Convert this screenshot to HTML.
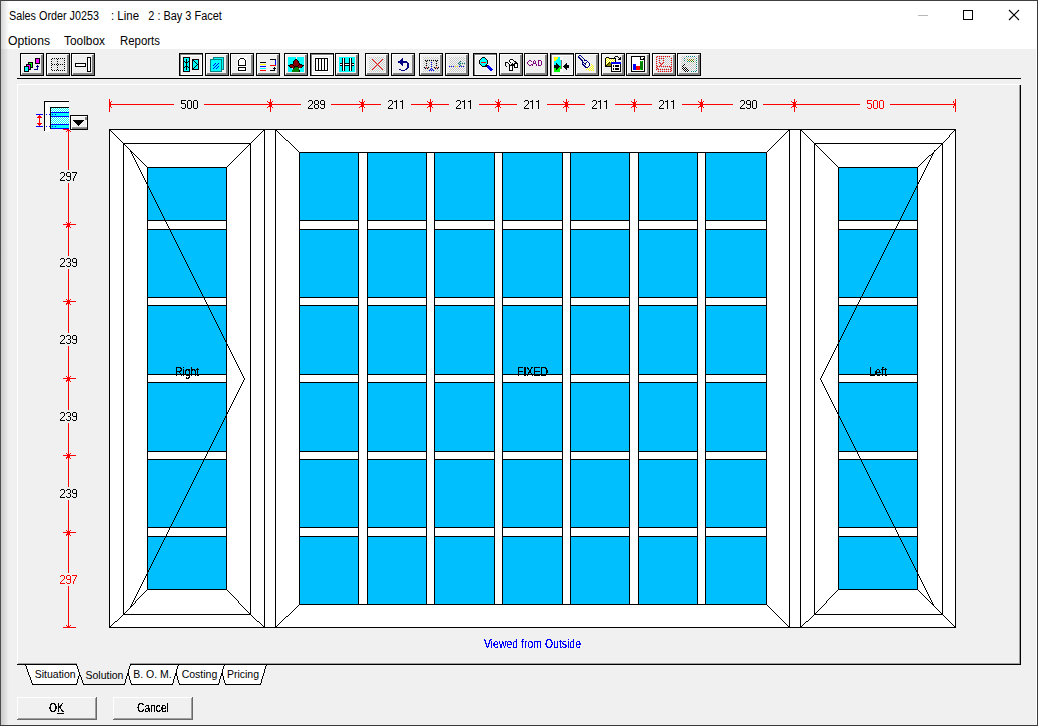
<!DOCTYPE html>
<html><head><meta charset="utf-8"><title>Sales Order</title>
<style>
html,body{margin:0;padding:0;background:#f0f0f0;overflow:hidden;}
body{width:1038px;height:726px;font-family:"Liberation Sans",sans-serif;}
svg{display:block;position:absolute;left:0;top:0;}
svg text{font-family:"Liberation Sans",sans-serif;}
.crisp{shape-rendering:crispEdges;}
</style></head>
<body>
<svg class="crisp" width="1038" height="726" viewBox="0 0 1038 726">
<rect x="0" y="0" width="1038" height="726" fill="#f0f0f0"/>
<rect x="0" y="0" width="1038" height="49" fill="#ffffff"/>
<defs><linearGradient id="lg" x1="0" x2="1" y1="0" y2="0"><stop offset="0" stop-color="#000" stop-opacity="0.16"/><stop offset="1" stop-color="#000" stop-opacity="0"/></linearGradient></defs>
<rect x="1" y="1" width="8" height="724" fill="url(#lg)"/>
<rect x="0" y="0" width="1038" height="1" fill="#3f3f3f"/>
<rect x="0" y="0" width="1" height="726" fill="#4d4d4d"/>
<rect x="1036" y="49" width="1" height="676" fill="#ffffff"/>
<rect x="1037" y="0" width="1" height="726" fill="#3a3a3a"/>
<rect x="0" y="725" width="1038" height="1" fill="#3a3a3a"/>
<rect x="918" y="15" width="10" height="1" fill="#b8b8b8"/>
<rect x="963" y="10" width="10" height="1" fill="#000"/>
<rect x="963" y="19" width="10" height="1" fill="#000"/>
<rect x="963" y="10" width="1" height="10" fill="#000"/>
<rect x="972" y="10" width="1" height="10" fill="#000"/>
<path d="M1009 10.5 L1019 20.5 M1019 10.5 L1009 20.5" stroke="#000" stroke-width="1.1" fill="none" shape-rendering="geometricPrecision" transform="translate(0,-0.5)"/>
<text x="9" y="19.5" font-size="12" fill="#000" text-anchor="start" textLength="90" lengthAdjust="spacingAndGlyphs">Sales Order J0253</text>
<text x="111" y="19.5" font-size="12" fill="#000" text-anchor="start" textLength="28" lengthAdjust="spacingAndGlyphs">: Line</text>
<text x="148.3" y="19.5" font-size="12" fill="#000" text-anchor="start" textLength="73.5" lengthAdjust="spacingAndGlyphs">2 : Bay 3 Facet</text>
<text x="8" y="44.5" font-size="12" fill="#000" text-anchor="start" textLength="42" lengthAdjust="spacingAndGlyphs">Options</text>
<text x="64" y="44.5" font-size="12" fill="#000" text-anchor="start" textLength="41" lengthAdjust="spacingAndGlyphs">Toolbox</text>
<text x="120" y="44.5" font-size="12" fill="#000" text-anchor="start" textLength="40" lengthAdjust="spacingAndGlyphs">Reports</text>
<rect x="17" y="78" width="1004" height="1" fill="#000"/>
<rect x="17" y="84" width="1003" height="1" fill="#ffffff"/>
<rect x="17" y="84" width="1" height="581" fill="#ffffff"/>
<rect x="1019" y="85" width="1" height="579" fill="#a0a0a0"/>
<rect x="18" y="663" width="1002" height="1" fill="#a0a0a0"/>
<rect x="1020" y="85" width="1" height="580" fill="#000"/>
<rect x="17" y="664" width="1004" height="1" fill="#000"/>
<defs><pattern id="dz" x="0" y="0" width="2" height="2" patternUnits="userSpaceOnUse"><rect width="2" height="2" fill="#fbfbfb"/><rect x="0" y="0" width="1" height="1" fill="#c6c6c6"/><rect x="1" y="1" width="1" height="1" fill="#c6c6c6"/></pattern><pattern id="dzl" x="0" y="0" width="2" height="2" patternUnits="userSpaceOnUse"><rect width="2" height="2" fill="#f2f2f2"/><rect x="0" y="0" width="1" height="1" fill="#dadada"/><rect x="1" y="1" width="1" height="1" fill="#dadada"/></pattern><pattern id="dy" x="0" y="0" width="2" height="2" patternUnits="userSpaceOnUse"><rect width="2" height="2" fill="#ffff00"/><rect x="1" y="0" width="1" height="1" fill="#fff"/><rect x="0" y="1" width="1" height="1" fill="#fff"/></pattern></defs>
<rect x="20" y="53" width="24" height="23" fill="#f0f0f0"/>
<rect x="20" y="53" width="24" height="1" fill="#000"/>
<rect x="20" y="75" width="24" height="1" fill="#000"/>
<rect x="20" y="53" width="1" height="23" fill="#000"/>
<rect x="43" y="53" width="1" height="23" fill="#000"/>
<rect x="21" y="54" width="22" height="1" fill="#fff"/>
<rect x="21" y="54" width="1" height="21" fill="#fff"/>
<rect x="21" y="74" width="22" height="1" fill="#808080"/>
<rect x="22" y="73" width="21" height="1" fill="#808080"/>
<rect x="42" y="54" width="1" height="21" fill="#808080"/>
<rect x="41" y="55" width="1" height="20" fill="#808080"/>
<path d="M42 54h1v1h-1z" fill="#c8c8c8"/>
<path d="M21 74h1v1h-1z" fill="#c8c8c8"/>
<rect x="35" y="58" width="5" height="6" fill="#ff00ff"/>
<rect x="35" y="58" width="5" height="1" fill="#000"/>
<rect x="35" y="63" width="5" height="1" fill="#000"/>
<rect x="35" y="58" width="1" height="6" fill="#000"/>
<rect x="39" y="58" width="1" height="6" fill="#000"/>
<rect x="28" y="62" width="5" height="6" fill="#00ff00"/>
<rect x="28" y="62" width="5" height="1" fill="#000"/>
<rect x="28" y="67" width="5" height="1" fill="#000"/>
<rect x="28" y="62" width="1" height="6" fill="#000"/>
<rect x="32" y="62" width="1" height="6" fill="#000"/>
<rect x="26" y="64" width="5" height="6" fill="#ff00ff"/>
<rect x="26" y="64" width="5" height="1" fill="#000"/>
<rect x="26" y="69" width="5" height="1" fill="#000"/>
<rect x="26" y="64" width="1" height="6" fill="#000"/>
<rect x="30" y="64" width="1" height="6" fill="#000"/>
<rect x="24" y="66" width="5" height="6" fill="#00ffff"/>
<rect x="24" y="66" width="5" height="1" fill="#000"/>
<rect x="24" y="71" width="5" height="1" fill="#000"/>
<rect x="24" y="66" width="1" height="6" fill="#000"/>
<rect x="28" y="66" width="1" height="6" fill="#000"/>
<rect x="34" y="69" width="4" height="1" fill="#000080"/>
<rect x="37" y="65" width="1" height="5" fill="#000080"/>
<rect x="36" y="66" width="3" height="1" fill="#000080"/>
<rect x="46" y="53" width="24" height="23" fill="#f0f0f0"/>
<rect x="46" y="53" width="24" height="1" fill="#000"/>
<rect x="46" y="75" width="24" height="1" fill="#000"/>
<rect x="46" y="53" width="1" height="23" fill="#000"/>
<rect x="69" y="53" width="1" height="23" fill="#000"/>
<rect x="47" y="54" width="22" height="1" fill="#fff"/>
<rect x="47" y="54" width="1" height="21" fill="#fff"/>
<rect x="47" y="74" width="22" height="1" fill="#808080"/>
<rect x="48" y="73" width="21" height="1" fill="#808080"/>
<rect x="68" y="54" width="1" height="21" fill="#808080"/>
<rect x="67" y="55" width="1" height="20" fill="#808080"/>
<path d="M68 54h1v1h-1z" fill="#c8c8c8"/>
<path d="M47 74h1v1h-1z" fill="#c8c8c8"/>
<rect x="51" y="58" width="14" height="13" fill="url(#dzl)"/>
<path d="M52 58h1v1h-1zM52 64h1v1h-1zM52 70h1v1h-1zM54 58h1v1h-1zM54 64h1v1h-1zM54 70h1v1h-1zM56 58h1v1h-1zM56 64h1v1h-1zM56 70h1v1h-1zM58 58h1v1h-1zM58 64h1v1h-1zM58 70h1v1h-1zM60 58h1v1h-1zM60 64h1v1h-1zM60 70h1v1h-1zM62 58h1v1h-1zM62 64h1v1h-1zM62 70h1v1h-1zM64 58h1v1h-1zM64 64h1v1h-1zM64 70h1v1h-1zM51 59h1v1h-1zM57 59h1v1h-1zM51 61h1v1h-1zM57 61h1v1h-1zM51 63h1v1h-1zM57 63h1v1h-1zM51 65h1v1h-1zM57 65h1v1h-1zM51 67h1v1h-1zM57 67h1v1h-1zM51 69h1v1h-1zM57 69h1v1h-1zM64 58h1v1h-1zM64 60h1v1h-1zM64 62h1v1h-1zM64 64h1v1h-1zM64 66h1v1h-1zM64 68h1v1h-1zM64 70h1v1h-1zM56 64h1v1h-1zM58 64h1v1h-1zM52 64h1v1h-1z" fill="#000"/>
<rect x="71" y="53" width="24" height="23" fill="#f0f0f0"/>
<rect x="71" y="53" width="24" height="1" fill="#000"/>
<rect x="71" y="75" width="24" height="1" fill="#000"/>
<rect x="71" y="53" width="1" height="23" fill="#000"/>
<rect x="94" y="53" width="1" height="23" fill="#000"/>
<rect x="72" y="54" width="22" height="1" fill="#fff"/>
<rect x="72" y="54" width="1" height="21" fill="#fff"/>
<rect x="72" y="74" width="22" height="1" fill="#808080"/>
<rect x="73" y="73" width="21" height="1" fill="#808080"/>
<rect x="93" y="54" width="1" height="21" fill="#808080"/>
<rect x="92" y="55" width="1" height="20" fill="#808080"/>
<path d="M93 54h1v1h-1z" fill="#c8c8c8"/>
<path d="M72 74h1v1h-1z" fill="#c8c8c8"/>
<rect x="75" y="63" width="11" height="4" fill="#fff"/>
<rect x="75" y="63" width="11" height="1" fill="#000"/>
<rect x="75" y="66" width="11" height="1" fill="#000"/>
<rect x="75" y="63" width="1" height="4" fill="#000"/>
<rect x="85" y="63" width="1" height="4" fill="#000"/>
<rect x="87" y="57" width="4" height="15" fill="#fff"/>
<rect x="87" y="57" width="4" height="1" fill="#000"/>
<rect x="87" y="71" width="4" height="1" fill="#000"/>
<rect x="87" y="57" width="1" height="15" fill="#000"/>
<rect x="90" y="57" width="1" height="15" fill="#000"/>
<rect x="179" y="53" width="24" height="23" fill="#f0f0f0"/>
<rect x="179" y="53" width="24" height="1" fill="#000"/>
<rect x="179" y="75" width="24" height="1" fill="#000"/>
<rect x="179" y="53" width="1" height="23" fill="#000"/>
<rect x="202" y="53" width="1" height="23" fill="#000"/>
<rect x="180" y="54" width="22" height="1" fill="#808080"/>
<rect x="180" y="54" width="1" height="21" fill="#808080"/>
<rect x="181" y="55" width="21" height="1" fill="#fff"/>
<rect x="181" y="55" width="1" height="20" fill="#fff"/>
<rect x="181" y="74" width="21" height="1" fill="#fff"/>
<rect x="201" y="55" width="1" height="20" fill="#fff"/>
<rect x="183" y="57" width="7" height="15" fill="#00ffff"/>
<rect x="183" y="57" width="7" height="1" fill="#100000"/>
<rect x="183" y="71" width="7" height="1" fill="#100000"/>
<rect x="183" y="57" width="1" height="15" fill="#100000"/>
<rect x="189" y="57" width="1" height="15" fill="#100000"/>
<rect x="186" y="59" width="1" height="11" fill="#000"/>
<path d="M184 61h1v1h-1zM185 62h1v1h-1zM187 62h1v1h-1zM188 61h1v1h-1zM184 67h1v1h-1zM185 66h1v1h-1zM187 66h1v1h-1zM188 67h1v1h-1z" fill="#000"/>
<rect x="192" y="59" width="7" height="11" fill="#00ffff"/>
<rect x="192" y="59" width="7" height="1" fill="#100000"/>
<rect x="192" y="69" width="7" height="1" fill="#100000"/>
<rect x="192" y="59" width="1" height="11" fill="#100000"/>
<rect x="198" y="59" width="1" height="11" fill="#100000"/>
<path d="M193 60h1v1h-1zM194 61h1v1h-1zM195 62h1v1h-1zM196 63h1v1h-1zM197 64h1v1h-1z" fill="#000"/>
<path d="M197 64h1v1h-1zM196 65h1v1h-1zM195 66h1v1h-1zM194 67h1v1h-1zM193 68h1v1h-1z" fill="#000"/>
<rect x="205" y="53" width="24" height="23" fill="#f0f0f0"/>
<rect x="205" y="53" width="24" height="1" fill="#000"/>
<rect x="205" y="75" width="24" height="1" fill="#000"/>
<rect x="205" y="53" width="1" height="23" fill="#000"/>
<rect x="228" y="53" width="1" height="23" fill="#000"/>
<rect x="206" y="54" width="22" height="1" fill="#fff"/>
<rect x="206" y="54" width="1" height="21" fill="#fff"/>
<rect x="206" y="74" width="22" height="1" fill="#808080"/>
<rect x="207" y="73" width="21" height="1" fill="#808080"/>
<rect x="227" y="54" width="1" height="21" fill="#808080"/>
<rect x="226" y="55" width="1" height="20" fill="#808080"/>
<path d="M227 54h1v1h-1z" fill="#c8c8c8"/>
<path d="M206 74h1v1h-1z" fill="#c8c8c8"/>
<rect x="213" y="57" width="11" height="13" fill="#00ffff"/>
<rect x="213" y="57" width="11" height="1" fill="#008080"/>
<rect x="213" y="69" width="11" height="1" fill="#008080"/>
<rect x="213" y="57" width="1" height="13" fill="#008080"/>
<rect x="223" y="57" width="1" height="13" fill="#008080"/>
<rect x="210" y="59" width="12" height="13" fill="#00ffff"/>
<rect x="210" y="59" width="12" height="1" fill="#008080"/>
<rect x="210" y="71" width="12" height="1" fill="#008080"/>
<rect x="210" y="59" width="1" height="13" fill="#008080"/>
<rect x="221" y="59" width="1" height="13" fill="#008080"/>
<path d="M215 63h1v1h-1zM214 64h1v1h-1zM213 65h1v1h-1zM218 63h1v1h-1zM217 64h1v1h-1zM216 65h1v1h-1zM215 66h1v1h-1zM214 67h1v1h-1zM213 68h1v1h-1zM218 66h1v1h-1zM217 67h1v1h-1zM216 68h1v1h-1z" fill="#0000ff"/>
<rect x="230" y="53" width="24" height="23" fill="#f0f0f0"/>
<rect x="230" y="53" width="24" height="1" fill="#000"/>
<rect x="230" y="75" width="24" height="1" fill="#000"/>
<rect x="230" y="53" width="1" height="23" fill="#000"/>
<rect x="253" y="53" width="1" height="23" fill="#000"/>
<rect x="231" y="54" width="22" height="1" fill="#fff"/>
<rect x="231" y="54" width="1" height="21" fill="#fff"/>
<rect x="231" y="74" width="22" height="1" fill="#808080"/>
<rect x="232" y="73" width="21" height="1" fill="#808080"/>
<rect x="252" y="54" width="1" height="21" fill="#808080"/>
<rect x="251" y="55" width="1" height="20" fill="#808080"/>
<path d="M252 54h1v1h-1z" fill="#c8c8c8"/>
<path d="M231 74h1v1h-1z" fill="#c8c8c8"/>
<rect x="237" y="57" width="10" height="15" fill="#fff"/>
<rect x="240" y="58" width="4" height="1" fill="#000"/>
<path d="M239 59h1v1h-1zM244 59h1v1h-1z" fill="#000"/>
<rect x="238" y="60" width="1" height="6" fill="#000"/>
<rect x="245" y="60" width="1" height="6" fill="#000"/>
<rect x="238" y="65" width="8" height="1" fill="#000"/>
<rect x="238" y="67" width="8" height="4" fill="#fff"/>
<rect x="238" y="67" width="8" height="1" fill="#000"/>
<rect x="238" y="70" width="8" height="1" fill="#000"/>
<rect x="238" y="67" width="1" height="4" fill="#000"/>
<rect x="245" y="67" width="1" height="4" fill="#000"/>
<rect x="256" y="53" width="24" height="23" fill="#f0f0f0"/>
<rect x="256" y="53" width="24" height="1" fill="#000"/>
<rect x="256" y="75" width="24" height="1" fill="#000"/>
<rect x="256" y="53" width="1" height="23" fill="#000"/>
<rect x="279" y="53" width="1" height="23" fill="#000"/>
<rect x="257" y="54" width="22" height="1" fill="#fff"/>
<rect x="257" y="54" width="1" height="21" fill="#fff"/>
<rect x="257" y="74" width="22" height="1" fill="#808080"/>
<rect x="258" y="73" width="21" height="1" fill="#808080"/>
<rect x="278" y="54" width="1" height="21" fill="#808080"/>
<rect x="277" y="55" width="1" height="20" fill="#808080"/>
<path d="M278 54h1v1h-1z" fill="#c8c8c8"/>
<path d="M257 74h1v1h-1z" fill="#c8c8c8"/>
<rect x="260" y="62" width="6" height="1" fill="#000"/>
<rect x="260" y="64" width="6" height="1" fill="#ffff00"/>
<rect x="260" y="66" width="6" height="1" fill="#0000ff"/>
<rect x="260" y="68" width="6" height="1" fill="#00ffff"/>
<rect x="260" y="70" width="6" height="1" fill="#ff0000"/>
<rect x="270" y="59" width="6" height="1" fill="#000"/>
<rect x="275" y="60" width="1" height="5" fill="#0000ff"/>
<rect x="270" y="65" width="6" height="1" fill="#ff0000"/>
<rect x="270" y="70" width="5" height="1" fill="#000"/>
<rect x="274" y="67" width="1" height="4" fill="#000"/>
<rect x="273" y="68" width="3" height="1" fill="#000"/>
<rect x="284" y="53" width="24" height="23" fill="#f0f0f0"/>
<rect x="284" y="53" width="24" height="1" fill="#000"/>
<rect x="284" y="75" width="24" height="1" fill="#000"/>
<rect x="284" y="53" width="1" height="23" fill="#000"/>
<rect x="307" y="53" width="1" height="23" fill="#000"/>
<rect x="285" y="54" width="22" height="1" fill="#fff"/>
<rect x="285" y="54" width="1" height="21" fill="#fff"/>
<rect x="285" y="74" width="22" height="1" fill="#808080"/>
<rect x="286" y="73" width="21" height="1" fill="#808080"/>
<rect x="306" y="54" width="1" height="21" fill="#808080"/>
<rect x="305" y="55" width="1" height="20" fill="#808080"/>
<path d="M306 54h1v1h-1z" fill="#c8c8c8"/>
<path d="M285 74h1v1h-1z" fill="#c8c8c8"/>
<rect x="288" y="57" width="16" height="15" fill="#00ffff"/>
<path d="M295 59h1v1h-1zM296 59h1v1h-1zM294 60h1v1h-1zM297 60h1v1h-1zM293 61h1v1h-1zM298 61h1v1h-1zM293 62h1v1h-1zM298 62h1v1h-1zM293 63h1v1h-1zM299 63h1v1h-1zM290 64h1v1h-1zM291 64h1v1h-1zM292 64h1v1h-1zM299 64h1v1h-1zM300 64h1v1h-1zM301 64h1v1h-1zM288 65h1v1h-1zM289 65h1v1h-1zM293 65h1v1h-1zM298 65h1v1h-1zM302 65h1v1h-1zM303 65h1v1h-1zM289 66h1v1h-1zM294 66h1v1h-1zM295 66h1v1h-1zM296 66h1v1h-1zM297 66h1v1h-1zM302 66h1v1h-1zM290 67h1v1h-1zM291 67h1v1h-1zM294 67h1v1h-1zM298 67h1v1h-1zM301 67h1v1h-1zM293 68h1v1h-1zM299 70h1v1h-1zM299 71h1v1h-1z" fill="#000"/>
<path d="M295 60h1v1h-1zM296 60h1v1h-1zM294 61h1v1h-1zM295 61h1v1h-1zM296 61h1v1h-1zM297 61h1v1h-1zM294 62h1v1h-1zM295 62h1v1h-1zM296 62h1v1h-1zM297 62h1v1h-1zM294 63h1v1h-1zM295 63h1v1h-1zM296 63h1v1h-1zM297 63h1v1h-1zM298 63h1v1h-1zM293 64h1v1h-1zM294 64h1v1h-1zM295 64h1v1h-1zM296 64h1v1h-1zM297 64h1v1h-1zM298 64h1v1h-1zM290 65h1v1h-1zM291 65h1v1h-1zM292 65h1v1h-1zM294 65h1v1h-1zM295 65h1v1h-1zM296 65h1v1h-1zM297 65h1v1h-1zM299 65h1v1h-1zM300 65h1v1h-1zM301 65h1v1h-1zM290 66h1v1h-1zM291 66h1v1h-1zM292 66h1v1h-1zM293 66h1v1h-1zM298 66h1v1h-1zM299 66h1v1h-1zM300 66h1v1h-1zM301 66h1v1h-1zM292 67h1v1h-1zM293 67h1v1h-1zM299 67h1v1h-1zM300 67h1v1h-1z" fill="#8b0000"/>
<path d="M295 67h1v1h-1zM296 67h1v1h-1zM297 67h1v1h-1zM294 68h1v1h-1zM295 68h1v1h-1zM296 68h1v1h-1zM297 68h1v1h-1zM298 68h1v1h-1zM293 69h1v1h-1zM294 69h1v1h-1zM295 69h1v1h-1zM296 69h1v1h-1zM297 69h1v1h-1zM298 69h1v1h-1zM292 70h1v1h-1zM293 70h1v1h-1zM294 70h1v1h-1zM295 70h1v1h-1zM296 70h1v1h-1zM297 70h1v1h-1zM298 70h1v1h-1zM292 71h1v1h-1zM293 71h1v1h-1zM294 71h1v1h-1zM295 71h1v1h-1zM296 71h1v1h-1zM297 71h1v1h-1zM298 71h1v1h-1z" fill="#008000"/>
<path d="M296 57h1v1h-1zM296 58h1v1h-1zM292 68h1v1h-1zM299 68h1v1h-1z" fill="#ffe8e8"/>
<rect x="310" y="53" width="24" height="23" fill="#f0f0f0"/>
<rect x="310" y="53" width="24" height="1" fill="#000"/>
<rect x="310" y="75" width="24" height="1" fill="#000"/>
<rect x="310" y="53" width="1" height="23" fill="#000"/>
<rect x="333" y="53" width="1" height="23" fill="#000"/>
<rect x="311" y="54" width="22" height="1" fill="#808080"/>
<rect x="311" y="54" width="1" height="21" fill="#808080"/>
<rect x="312" y="55" width="21" height="1" fill="#fff"/>
<rect x="312" y="55" width="1" height="20" fill="#fff"/>
<rect x="312" y="74" width="21" height="1" fill="#fff"/>
<rect x="332" y="55" width="1" height="20" fill="#fff"/>
<rect x="314" y="57" width="15" height="15" fill="#fff"/>
<rect x="315" y="58" width="13" height="13" fill="#fff"/>
<rect x="315" y="58" width="13" height="1" fill="#000"/>
<rect x="315" y="70" width="13" height="1" fill="#000"/>
<rect x="315" y="58" width="1" height="13" fill="#000"/>
<rect x="327" y="58" width="1" height="13" fill="#000"/>
<rect x="318" y="58" width="1" height="13" fill="#000"/>
<rect x="321" y="58" width="1" height="13" fill="#000"/>
<rect x="324" y="58" width="1" height="13" fill="#000"/>
<rect x="335" y="53" width="24" height="23" fill="#f0f0f0"/>
<rect x="335" y="53" width="24" height="1" fill="#000"/>
<rect x="335" y="75" width="24" height="1" fill="#000"/>
<rect x="335" y="53" width="1" height="23" fill="#000"/>
<rect x="358" y="53" width="1" height="23" fill="#000"/>
<rect x="336" y="54" width="22" height="1" fill="#fff"/>
<rect x="336" y="54" width="1" height="21" fill="#fff"/>
<rect x="336" y="74" width="22" height="1" fill="#808080"/>
<rect x="337" y="73" width="21" height="1" fill="#808080"/>
<rect x="357" y="54" width="1" height="21" fill="#808080"/>
<rect x="356" y="55" width="1" height="20" fill="#808080"/>
<path d="M357 54h1v1h-1z" fill="#c8c8c8"/>
<path d="M336 74h1v1h-1z" fill="#c8c8c8"/>
<rect x="339" y="57" width="16" height="15" fill="#00ffff"/>
<rect x="340" y="63" width="14" height="1" fill="#000"/>
<rect x="340" y="64" width="14" height="1" fill="#fff"/>
<rect x="340" y="65" width="14" height="1" fill="#000"/>
<rect x="342" y="58" width="1" height="13" fill="#000"/>
<rect x="343" y="58" width="1" height="13" fill="#fff"/>
<rect x="344" y="58" width="1" height="13" fill="#000"/>
<rect x="349" y="58" width="1" height="13" fill="#000"/>
<rect x="350" y="58" width="1" height="13" fill="#fff"/>
<rect x="351" y="58" width="1" height="13" fill="#000"/>
<rect x="365" y="53" width="24" height="23" fill="#f0f0f0"/>
<rect x="365" y="53" width="24" height="1" fill="#000"/>
<rect x="365" y="75" width="24" height="1" fill="#000"/>
<rect x="365" y="53" width="1" height="23" fill="#000"/>
<rect x="388" y="53" width="1" height="23" fill="#000"/>
<rect x="366" y="54" width="22" height="1" fill="#fff"/>
<rect x="366" y="54" width="1" height="21" fill="#fff"/>
<rect x="366" y="74" width="22" height="1" fill="#808080"/>
<rect x="367" y="73" width="21" height="1" fill="#808080"/>
<rect x="387" y="54" width="1" height="21" fill="#808080"/>
<rect x="386" y="55" width="1" height="20" fill="#808080"/>
<path d="M387 54h1v1h-1z" fill="#c8c8c8"/>
<path d="M366 74h1v1h-1z" fill="#c8c8c8"/>
<rect x="369" y="57" width="16" height="15" fill="url(#dz)"/>
<path d="M372 59h1v1h-1zM373 60h1v1h-1zM374 61h1v1h-1zM375 62h1v1h-1zM376 63h1v1h-1zM377 64h1v1h-1zM378 65h1v1h-1zM379 66h1v1h-1zM380 67h1v1h-1zM381 68h1v1h-1zM382 69h1v1h-1z" fill="#ff0000"/>
<path d="M382 59h1v1h-1zM381 60h1v1h-1zM380 61h1v1h-1zM379 62h1v1h-1zM378 63h1v1h-1zM377 64h1v1h-1zM376 65h1v1h-1zM375 66h1v1h-1zM374 67h1v1h-1zM373 68h1v1h-1zM372 69h1v1h-1z" fill="#ff0000"/>
<rect x="391" y="53" width="24" height="23" fill="#f0f0f0"/>
<rect x="391" y="53" width="24" height="1" fill="#000"/>
<rect x="391" y="75" width="24" height="1" fill="#000"/>
<rect x="391" y="53" width="1" height="23" fill="#000"/>
<rect x="414" y="53" width="1" height="23" fill="#000"/>
<rect x="392" y="54" width="22" height="1" fill="#fff"/>
<rect x="392" y="54" width="1" height="21" fill="#fff"/>
<rect x="392" y="74" width="22" height="1" fill="#808080"/>
<rect x="393" y="73" width="21" height="1" fill="#808080"/>
<rect x="413" y="54" width="1" height="21" fill="#808080"/>
<rect x="412" y="55" width="1" height="20" fill="#808080"/>
<path d="M413 54h1v1h-1z" fill="#c8c8c8"/>
<path d="M392 74h1v1h-1z" fill="#c8c8c8"/>
<path d="M402 58h1v1h-1zM401 59h1v1h-1zM402 59h1v1h-1zM400 60h1v1h-1zM401 60h1v1h-1zM402 60h1v1h-1zM398 61h1v1h-1zM399 61h1v1h-1zM400 61h1v1h-1zM401 61h1v1h-1zM402 61h1v1h-1zM403 61h1v1h-1zM404 61h1v1h-1zM405 61h1v1h-1zM406 61h1v1h-1zM398 62h1v1h-1zM399 62h1v1h-1zM400 62h1v1h-1zM401 62h1v1h-1zM402 62h1v1h-1zM403 62h1v1h-1zM404 62h1v1h-1zM405 62h1v1h-1zM406 62h1v1h-1zM407 62h1v1h-1zM400 63h1v1h-1zM401 63h1v1h-1zM402 63h1v1h-1zM401 64h1v1h-1zM402 64h1v1h-1zM402 65h1v1h-1zM407 63h1v1h-1zM408 63h1v1h-1zM407 64h1v1h-1zM408 64h1v1h-1zM407 65h1v1h-1zM408 65h1v1h-1zM407 66h1v1h-1zM408 66h1v1h-1zM407 67h1v1h-1zM408 67h1v1h-1zM406 68h1v1h-1zM407 68h1v1h-1zM405 69h1v1h-1zM406 69h1v1h-1zM401 70h1v1h-1zM402 70h1v1h-1zM403 70h1v1h-1zM404 70h1v1h-1zM399 69h1v1h-1zM400 69h1v1h-1z" fill="#000080"/>
<rect x="419" y="53" width="24" height="23" fill="#f0f0f0"/>
<rect x="419" y="53" width="24" height="1" fill="#000"/>
<rect x="419" y="75" width="24" height="1" fill="#000"/>
<rect x="419" y="53" width="1" height="23" fill="#000"/>
<rect x="442" y="53" width="1" height="23" fill="#000"/>
<rect x="420" y="54" width="22" height="1" fill="#fff"/>
<rect x="420" y="54" width="1" height="21" fill="#fff"/>
<rect x="420" y="74" width="22" height="1" fill="#808080"/>
<rect x="421" y="73" width="21" height="1" fill="#808080"/>
<rect x="441" y="54" width="1" height="21" fill="#808080"/>
<rect x="440" y="55" width="1" height="20" fill="#808080"/>
<path d="M441 54h1v1h-1z" fill="#c8c8c8"/>
<path d="M420 74h1v1h-1z" fill="#c8c8c8"/>
<rect x="423" y="57" width="16" height="15" fill="url(#dz)"/>
<path d="M425 60h1v1h-1zM427 60h1v1h-1zM426 61h1v1h-1zM426 63h1v1h-1zM426 65h1v1h-1zM424 67h1v1h-1zM425 68h1v1h-1zM427 68h1v1h-1zM428 67h1v1h-1zM429 60h1v1h-1zM431 60h1v1h-1zM433 60h1v1h-1zM435 60h1v1h-1zM437 60h1v1h-1zM436 61h1v1h-1zM436 63h1v1h-1zM436 65h1v1h-1zM434 67h1v1h-1zM435 68h1v1h-1zM437 68h1v1h-1zM438 67h1v1h-1z" fill="#000"/>
<path d="M426 67h1v1h-1zM436 67h1v1h-1z" fill="#ff0000"/>
<path d="M431 62h1v1h-1zM431 64h1v1h-1zM431 66h1v1h-1zM431 68h1v1h-1zM430 69h1v1h-1zM432 69h1v1h-1zM429 70h1v1h-1zM431 70h1v1h-1zM433 70h1v1h-1z" fill="#0000ff"/>
<rect x="445" y="53" width="24" height="23" fill="#f0f0f0"/>
<rect x="445" y="53" width="24" height="1" fill="#000"/>
<rect x="445" y="75" width="24" height="1" fill="#000"/>
<rect x="445" y="53" width="1" height="23" fill="#000"/>
<rect x="468" y="53" width="1" height="23" fill="#000"/>
<rect x="446" y="54" width="22" height="1" fill="#fff"/>
<rect x="446" y="54" width="1" height="21" fill="#fff"/>
<rect x="446" y="74" width="22" height="1" fill="#808080"/>
<rect x="447" y="73" width="21" height="1" fill="#808080"/>
<rect x="467" y="54" width="1" height="21" fill="#808080"/>
<rect x="466" y="55" width="1" height="20" fill="#808080"/>
<path d="M467 54h1v1h-1z" fill="#c8c8c8"/>
<path d="M446 74h1v1h-1z" fill="#c8c8c8"/>
<rect x="449" y="57" width="16" height="15" fill="url(#dz)"/>
<path d="M449 66h1v1h-1zM451 66h1v1h-1zM453 66h1v1h-1zM459 66h1v1h-1zM461 66h1v1h-1zM463 66h1v1h-1z" fill="#0000ff"/>
<path d="M455 66h1v1h-1zM457 66h1v1h-1z" fill="#ffff00"/>
<path d="M458 63h1v1h-1zM460 63h1v1h-1zM462 63h1v1h-1zM464 63h1v1h-1zM459 62h1v1h-1zM460 61h1v1h-1zM459 64h1v1h-1zM460 65h1v1h-1z" fill="#008080"/>
<rect x="473" y="53" width="24" height="23" fill="#f0f0f0"/>
<rect x="473" y="53" width="24" height="1" fill="#000"/>
<rect x="473" y="75" width="24" height="1" fill="#000"/>
<rect x="473" y="53" width="1" height="23" fill="#000"/>
<rect x="496" y="53" width="1" height="23" fill="#000"/>
<rect x="474" y="54" width="22" height="1" fill="#808080"/>
<rect x="474" y="54" width="1" height="21" fill="#808080"/>
<rect x="475" y="55" width="21" height="1" fill="#fff"/>
<rect x="475" y="55" width="1" height="20" fill="#fff"/>
<rect x="475" y="74" width="21" height="1" fill="#fff"/>
<rect x="495" y="55" width="1" height="20" fill="#fff"/>
<path d="M482.5 57.5 H484.5 L487.5 60.5 V63.5 L484.5 66.5 H482.5 L479.5 63.5 V60.5 Z" fill="#00ffff" stroke="#000" stroke-width="1"/>
<rect x="481" y="62" width="5" height="1" fill="#ff0000"/>
<path d="M487.8 66.2 L491 69.4" stroke="#0000ff" stroke-width="2.6" fill="none" stroke-linecap="square"/>
<path d="M485 66h1v1h-1zM486 65h1v1h-1zM486 66h1v1h-1zM487 65h1v1h-1z" fill="#000"/>
<rect x="499" y="53" width="24" height="23" fill="#f0f0f0"/>
<rect x="499" y="53" width="24" height="1" fill="#000"/>
<rect x="499" y="75" width="24" height="1" fill="#000"/>
<rect x="499" y="53" width="1" height="23" fill="#000"/>
<rect x="522" y="53" width="1" height="23" fill="#000"/>
<rect x="500" y="54" width="22" height="1" fill="#fff"/>
<rect x="500" y="54" width="1" height="21" fill="#fff"/>
<rect x="500" y="74" width="22" height="1" fill="#808080"/>
<rect x="501" y="73" width="21" height="1" fill="#808080"/>
<rect x="521" y="54" width="1" height="21" fill="#808080"/>
<rect x="520" y="55" width="1" height="20" fill="#808080"/>
<path d="M521 54h1v1h-1z" fill="#c8c8c8"/>
<path d="M500 74h1v1h-1z" fill="#c8c8c8"/>
<rect x="510" y="66" width="2" height="4" fill="#fff"/>
<rect x="515" y="64" width="2" height="3" fill="#fff"/>
<rect x="510" y="60" width="3" height="2" fill="#fff"/>
<path d="M510 59h1v1h-1zM511 59h1v1h-1zM512 59h1v1h-1zM509 60h1v1h-1zM513 60h1v1h-1zM509 61h1v1h-1zM514 61h1v1h-1zM515 61h1v1h-1zM505 62h1v1h-1zM506 62h1v1h-1zM507 62h1v1h-1zM510 62h1v1h-1zM515 62h1v1h-1zM516 62h1v1h-1zM505 63h1v1h-1zM508 63h1v1h-1zM512 63h1v1h-1zM514 63h1v1h-1zM515 63h1v1h-1zM516 63h1v1h-1zM517 63h1v1h-1zM505 64h1v1h-1zM509 64h1v1h-1zM511 64h1v1h-1zM512 64h1v1h-1zM513 64h1v1h-1zM514 64h1v1h-1zM517 64h1v1h-1zM505 65h1v1h-1zM509 65h1v1h-1zM510 65h1v1h-1zM511 65h1v1h-1zM512 65h1v1h-1zM513 65h1v1h-1zM514 65h1v1h-1zM517 65h1v1h-1zM506 66h1v1h-1zM509 66h1v1h-1zM512 66h1v1h-1zM514 66h1v1h-1zM517 66h1v1h-1zM509 67h1v1h-1zM512 67h1v1h-1zM514 67h1v1h-1zM515 67h1v1h-1zM516 67h1v1h-1zM517 67h1v1h-1zM509 68h1v1h-1zM512 68h1v1h-1zM509 69h1v1h-1zM512 69h1v1h-1zM509 70h1v1h-1zM510 70h1v1h-1zM511 70h1v1h-1zM512 70h1v1h-1z" fill="#000"/>
<rect x="524" y="53" width="24" height="23" fill="#f0f0f0"/>
<rect x="524" y="53" width="24" height="1" fill="#000"/>
<rect x="524" y="75" width="24" height="1" fill="#000"/>
<rect x="524" y="53" width="1" height="23" fill="#000"/>
<rect x="547" y="53" width="1" height="23" fill="#000"/>
<rect x="525" y="54" width="22" height="1" fill="#fff"/>
<rect x="525" y="54" width="1" height="21" fill="#fff"/>
<rect x="525" y="74" width="22" height="1" fill="#808080"/>
<rect x="526" y="73" width="21" height="1" fill="#808080"/>
<rect x="546" y="54" width="1" height="21" fill="#808080"/>
<rect x="545" y="55" width="1" height="20" fill="#808080"/>
<path d="M546 54h1v1h-1z" fill="#c8c8c8"/>
<path d="M525 74h1v1h-1z" fill="#c8c8c8"/>
<path d="M529 60h1v1h-1zM530 60h1v1h-1zM534 60h1v1h-1zM538 60h1v1h-1zM539 60h1v1h-1zM540 60h1v1h-1zM528 61h1v1h-1zM531 61h1v1h-1zM533 61h1v1h-1zM535 61h1v1h-1zM538 61h1v1h-1zM541 61h1v1h-1zM527 62h1v1h-1zM533 62h1v1h-1zM535 62h1v1h-1zM538 62h1v1h-1zM541 62h1v1h-1zM527 63h1v1h-1zM533 63h1v1h-1zM534 63h1v1h-1zM535 63h1v1h-1zM538 63h1v1h-1zM541 63h1v1h-1zM528 64h1v1h-1zM531 64h1v1h-1zM532 64h1v1h-1zM536 64h1v1h-1zM538 64h1v1h-1zM541 64h1v1h-1zM529 65h1v1h-1zM530 65h1v1h-1zM532 65h1v1h-1zM536 65h1v1h-1zM538 65h1v1h-1zM539 65h1v1h-1zM540 65h1v1h-1z" fill="#800080"/>
<rect x="550" y="53" width="24" height="23" fill="#f0f0f0"/>
<rect x="550" y="53" width="24" height="1" fill="#000"/>
<rect x="550" y="75" width="24" height="1" fill="#000"/>
<rect x="550" y="53" width="1" height="23" fill="#000"/>
<rect x="573" y="53" width="1" height="23" fill="#000"/>
<rect x="551" y="54" width="22" height="1" fill="#808080"/>
<rect x="551" y="54" width="1" height="21" fill="#808080"/>
<rect x="552" y="55" width="21" height="1" fill="#fff"/>
<rect x="552" y="55" width="1" height="20" fill="#fff"/>
<rect x="552" y="74" width="21" height="1" fill="#fff"/>
<rect x="572" y="55" width="1" height="20" fill="#fff"/>
<rect x="560" y="57" width="3" height="15" fill="#fff"/>
<rect x="554" y="57" width="6" height="9" fill="#00ffff"/>
<rect x="554" y="66" width="6" height="6" fill="#00ff00"/>
<rect x="560" y="60" width="1" height="6" fill="#00ffff"/>
<rect x="560" y="66" width="1" height="3" fill="#00ff00"/>
<rect x="554" y="57" width="4" height="1" fill="#ffff00"/>
<rect x="554" y="58" width="4" height="1" fill="#ffff00"/>
<rect x="554" y="59" width="3" height="1" fill="#ffff00"/>
<rect x="554" y="60" width="2" height="1" fill="#ffff00"/>
<rect x="561" y="60" width="1" height="9" fill="#7a6a72"/>
<rect x="554" y="65" width="3" height="3" fill="#000"/>
<rect x="556" y="63" width="1" height="7" fill="#000"/>
<rect x="557" y="64" width="1" height="5" fill="#000"/>
<rect x="558" y="65" width="1" height="3" fill="#000"/>
<rect x="559" y="66" width="1" height="1" fill="#000"/>
<rect x="567" y="65" width="2" height="3" fill="#000"/>
<rect x="566" y="63" width="1" height="7" fill="#000"/>
<rect x="565" y="64" width="1" height="5" fill="#000"/>
<rect x="564" y="65" width="1" height="3" fill="#000"/>
<rect x="563" y="66" width="1" height="1" fill="#000"/>
<rect x="575" y="53" width="24" height="23" fill="#f0f0f0"/>
<rect x="575" y="53" width="24" height="1" fill="#000"/>
<rect x="575" y="75" width="24" height="1" fill="#000"/>
<rect x="575" y="53" width="1" height="23" fill="#000"/>
<rect x="598" y="53" width="1" height="23" fill="#000"/>
<rect x="576" y="54" width="22" height="1" fill="#fff"/>
<rect x="576" y="54" width="1" height="21" fill="#fff"/>
<rect x="576" y="74" width="22" height="1" fill="#808080"/>
<rect x="577" y="73" width="21" height="1" fill="#808080"/>
<rect x="597" y="54" width="1" height="21" fill="#808080"/>
<rect x="596" y="55" width="1" height="20" fill="#808080"/>
<path d="M597 54h1v1h-1z" fill="#c8c8c8"/>
<path d="M576 74h1v1h-1z" fill="#c8c8c8"/>
<path d="M578 56h1v1h-1zM578 57h1v1h-1zM579 57h1v1h-1zM579 58h1v1h-1zM580 58h1v1h-1zM580 59h1v1h-1zM581 59h1v1h-1zM581 60h1v1h-1zM582 60h1v1h-1zM582 61h1v1h-1zM582 62h1v1h-1zM582 63h1v1h-1zM582 64h1v1h-1zM583 64h1v1h-1zM583 65h1v1h-1zM584 65h1v1h-1zM584 66h1v1h-1zM585 66h1v1h-1zM585 67h1v1h-1zM586 67h1v1h-1zM587 67h1v1h-1zM588 66h1v1h-1zM589 65h1v1h-1zM589 64h1v1h-1zM589 63h1v1h-1zM588 62h1v1h-1zM587 61h1v1h-1zM586 60h1v1h-1zM585 60h1v1h-1zM584 60h1v1h-1zM579 55h1v1h-1zM580 55h1v1h-1zM581 56h1v1h-1zM582 57h1v1h-1zM583 58h1v1h-1zM584 59h1v1h-1zM585 63h1v1h-1zM585 64h1v1h-1zM586 62h1v1h-1zM583 62h1v1h-1zM584 63h1v1h-1z" fill="#000080"/>
<path d="M579 56h1v1h-1zM580 57h1v1h-1zM581 58h1v1h-1zM582 59h1v1h-1zM583 60h1v1h-1zM584 61h1v1h-1zM585 62h1v1h-1z" fill="#e6e6c8"/>
<path d="M583 61h1v1h-1zM580 56h1v1h-1zM581 57h1v1h-1zM582 58h1v1h-1zM583 59h1v1h-1zM585 61h1v1h-1zM586 61h1v1h-1zM584 62h1v1h-1zM583 63h1v1h-1zM584 64h1v1h-1zM585 65h1v1h-1z" fill="#f4f4f4"/>
<path d="M586 63h1v1h-1zM587 62h1v1h-1zM587 63h1v1h-1zM587 64h1v1h-1zM588 63h1v1h-1zM588 64h1v1h-1zM588 65h1v1h-1zM586 64h1v1h-1zM586 65h1v1h-1zM587 65h1v1h-1zM586 66h1v1h-1zM587 66h1v1h-1z" fill="#fff"/>
<path d="M591 64h1v1h-1zM592 65h1v1h-1zM591 66h1v1h-1zM593 66h1v1h-1zM590 67h1v1h-1zM592 67h1v1h-1zM587 68h1v1h-1zM589 68h1v1h-1zM591 68h1v1h-1zM593 68h1v1h-1zM586 69h1v1h-1zM588 69h1v1h-1zM590 69h1v1h-1zM592 69h1v1h-1zM589 70h1v1h-1zM591 70h1v1h-1zM593 70h1v1h-1z" fill="#ffff00"/>
<rect x="601" y="53" width="24" height="23" fill="#f0f0f0"/>
<rect x="601" y="53" width="24" height="1" fill="#000"/>
<rect x="601" y="75" width="24" height="1" fill="#000"/>
<rect x="601" y="53" width="1" height="23" fill="#000"/>
<rect x="624" y="53" width="1" height="23" fill="#000"/>
<rect x="602" y="54" width="22" height="1" fill="#fff"/>
<rect x="602" y="54" width="1" height="21" fill="#fff"/>
<rect x="602" y="74" width="22" height="1" fill="#808080"/>
<rect x="603" y="73" width="21" height="1" fill="#808080"/>
<rect x="623" y="54" width="1" height="21" fill="#808080"/>
<rect x="622" y="55" width="1" height="20" fill="#808080"/>
<path d="M623 54h1v1h-1z" fill="#c8c8c8"/>
<path d="M602 74h1v1h-1z" fill="#c8c8c8"/>
<rect x="606" y="58" width="9" height="8" fill="url(#dy)"/>
<path d="M607 66 L607 65 L610 63 L611 63 L611 66 Z" fill="#808000"/>
<rect x="606" y="57" width="3" height="1" fill="#000"/>
<rect x="609" y="58" width="7" height="1" fill="#000"/>
<rect x="605" y="58" width="1" height="9" fill="#000"/>
<rect x="605" y="66" width="7" height="1" fill="#000"/>
<rect x="615" y="58" width="1" height="4" fill="#000"/>
<path d="M606 65h1v1h-1zM607 64h1v1h-1zM608 63h1v1h-1zM609 62h1v1h-1z" fill="#000"/>
<path d="M614 57h1v1h-1zM615 56h1v1h-1zM616 56h1v1h-1zM617 56h1v1h-1zM618 57h1v1h-1zM619 58h1v1h-1zM620 57h1v1h-1zM620 58h1v1h-1zM620 59h1v1h-1zM619 59h1v1h-1zM618 59h1v1h-1z" fill="#000"/>
<rect x="611" y="62" width="10" height="10" fill="#fff"/>
<rect x="611" y="62" width="10" height="1" fill="#000"/>
<rect x="611" y="71" width="10" height="1" fill="#000"/>
<rect x="611" y="62" width="1" height="10" fill="#000"/>
<rect x="620" y="62" width="1" height="10" fill="#000"/>
<rect x="611" y="62" width="10" height="2" fill="#0000ff"/>
<rect x="613" y="65" width="1" height="2" fill="#000"/>
<rect x="615" y="65" width="4" height="2" fill="#000"/>
<rect x="613" y="68" width="1" height="2" fill="#000"/>
<rect x="615" y="68" width="4" height="2" fill="#000"/>
<rect x="626" y="53" width="24" height="23" fill="#f0f0f0"/>
<rect x="626" y="53" width="24" height="1" fill="#000"/>
<rect x="626" y="75" width="24" height="1" fill="#000"/>
<rect x="626" y="53" width="1" height="23" fill="#000"/>
<rect x="649" y="53" width="1" height="23" fill="#000"/>
<rect x="627" y="54" width="22" height="1" fill="#fff"/>
<rect x="627" y="54" width="1" height="21" fill="#fff"/>
<rect x="627" y="74" width="22" height="1" fill="#808080"/>
<rect x="628" y="73" width="21" height="1" fill="#808080"/>
<rect x="648" y="54" width="1" height="21" fill="#808080"/>
<rect x="647" y="55" width="1" height="20" fill="#808080"/>
<path d="M648 54h1v1h-1z" fill="#c8c8c8"/>
<path d="M627 74h1v1h-1z" fill="#c8c8c8"/>
<rect x="631" y="56" width="14" height="16" fill="#fff"/>
<rect x="631" y="56" width="14" height="1" fill="#000"/>
<rect x="631" y="71" width="14" height="1" fill="#000"/>
<rect x="631" y="56" width="1" height="16" fill="#000"/>
<rect x="644" y="56" width="1" height="16" fill="#000"/>
<rect x="640" y="57" width="4" height="3" fill="#000"/>
<rect x="641" y="57" width="2" height="2" fill="#fff"/>
<path d="M643 57h1v1h-1z" fill="#fff"/>
<rect x="633" y="64" width="3" height="6" fill="#0000ff"/>
<rect x="636" y="66" width="4" height="4" fill="#ff0000"/>
<rect x="640" y="61" width="3" height="9" fill="#008000"/>
<path d="M641 61h1v1h-1zM640 69h1v1h-1z" fill="#00ff00"/>
<rect x="652" y="53" width="24" height="23" fill="#f0f0f0"/>
<rect x="652" y="53" width="24" height="1" fill="#000"/>
<rect x="652" y="75" width="24" height="1" fill="#000"/>
<rect x="652" y="53" width="1" height="23" fill="#000"/>
<rect x="675" y="53" width="1" height="23" fill="#000"/>
<rect x="653" y="54" width="22" height="1" fill="#fff"/>
<rect x="653" y="54" width="1" height="21" fill="#fff"/>
<rect x="653" y="74" width="22" height="1" fill="#808080"/>
<rect x="654" y="73" width="21" height="1" fill="#808080"/>
<rect x="674" y="54" width="1" height="21" fill="#808080"/>
<rect x="673" y="55" width="1" height="20" fill="#808080"/>
<path d="M674 54h1v1h-1z" fill="#c8c8c8"/>
<path d="M653 74h1v1h-1z" fill="#c8c8c8"/>
<rect x="656" y="56" width="16" height="16" fill="url(#dz)"/>
<path d="M657 56h1v1h-1zM659 56h1v1h-1zM661 56h1v1h-1zM663 56h1v1h-1zM665 56h1v1h-1zM667 56h1v1h-1zM669 56h1v1h-1zM656 57h1v1h-1zM656 59h1v1h-1zM656 61h1v1h-1zM656 63h1v1h-1zM656 65h1v1h-1zM656 67h1v1h-1zM656 69h1v1h-1zM671 58h1v1h-1zM671 60h1v1h-1zM671 62h1v1h-1zM671 64h1v1h-1zM671 66h1v1h-1zM671 68h1v1h-1zM671 70h1v1h-1zM659 58h1v1h-1zM661 58h1v1h-1zM663 58h1v1h-1zM659 60h1v1h-1zM663 60h1v1h-1zM659 62h1v1h-1zM663 62h1v1h-1zM660 63h1v1h-1zM662 63h1v1h-1zM661 64h1v1h-1zM660 65h1v1h-1zM659 66h1v1h-1zM657 66h1v1h-1zM659 66h1v1h-1zM661 66h1v1h-1zM663 66h1v1h-1zM665 66h1v1h-1zM667 66h1v1h-1zM669 66h1v1h-1zM671 66h1v1h-1zM657 68h1v1h-1zM658 69h1v1h-1zM670 67h1v1h-1zM670 69h1v1h-1zM660 69h1v1h-1zM662 69h1v1h-1zM664 69h1v1h-1zM666 69h1v1h-1zM668 69h1v1h-1zM658 71h1v1h-1zM660 71h1v1h-1zM662 71h1v1h-1zM664 71h1v1h-1zM666 71h1v1h-1zM668 71h1v1h-1zM670 71h1v1h-1z" fill="#ff0000"/>
<rect x="677" y="53" width="24" height="23" fill="#f0f0f0"/>
<rect x="677" y="53" width="24" height="1" fill="#000"/>
<rect x="677" y="75" width="24" height="1" fill="#000"/>
<rect x="677" y="53" width="1" height="23" fill="#000"/>
<rect x="700" y="53" width="1" height="23" fill="#000"/>
<rect x="678" y="54" width="22" height="1" fill="#fff"/>
<rect x="678" y="54" width="1" height="21" fill="#fff"/>
<rect x="678" y="74" width="22" height="1" fill="#808080"/>
<rect x="679" y="73" width="21" height="1" fill="#808080"/>
<rect x="699" y="54" width="1" height="21" fill="#808080"/>
<rect x="698" y="55" width="1" height="20" fill="#808080"/>
<path d="M699 54h1v1h-1z" fill="#c8c8c8"/>
<path d="M678 74h1v1h-1z" fill="#c8c8c8"/>
<rect x="681" y="56" width="16" height="16" fill="url(#dz)"/>
<path d="M686 56h1v1h-1zM688 56h1v1h-1zM690 56h1v1h-1zM692 56h1v1h-1zM694 56h1v1h-1zM684 58h1v1h-1zM684 60h1v1h-1zM696 58h1v1h-1zM696 60h1v1h-1zM696 62h1v1h-1zM696 64h1v1h-1zM696 66h1v1h-1zM696 68h1v1h-1zM696 70h1v1h-1zM691 71h1v1h-1zM693 71h1v1h-1zM695 71h1v1h-1zM687 61h1v1h-1zM689 61h1v1h-1z" fill="#008080"/>
<path d="M691 61h1v1h-1zM693 61h1v1h-1z" fill="#008000"/>
<path d="M687 59h1v1h-1zM689 59h1v1h-1zM691 59h1v1h-1zM693 59h1v1h-1zM688 60h1v1h-1zM690 60h1v1h-1zM692 60h1v1h-1z" fill="#808000"/>
<path d="M684 64h1v1h-1zM683 65h1v1h-1zM682 66h1v1h-1zM683 67h1v1h-1zM684 68h1v1h-1zM685 69h1v1h-1zM686 70h1v1h-1zM687 71h1v1h-1zM682 68h1v1h-1zM683 69h1v1h-1zM684 70h1v1h-1zM685 67h1v1h-1zM686 68h1v1h-1zM687 69h1v1h-1zM688 70h1v1h-1zM685 71h1v1h-1z" fill="#000"/>
<rect x="109" y="129" width="847" height="499" fill="#ffffff"/>
<rect x="109" y="129" width="847" height="1" fill="#000"/>
<rect x="109" y="627" width="847" height="1" fill="#000"/>
<rect x="109" y="129" width="1" height="499" fill="#000"/>
<rect x="955" y="129" width="1" height="499" fill="#000"/>
<rect x="264" y="129" width="1" height="499" fill="#000"/>
<rect x="275" y="129" width="1" height="499" fill="#000"/>
<rect x="789" y="129" width="1" height="499" fill="#000"/>
<rect x="800" y="129" width="1" height="499" fill="#000"/>
<rect x="123" y="143" width="128" height="1" fill="#000"/>
<rect x="123" y="614" width="128" height="1" fill="#000"/>
<rect x="123" y="143" width="1" height="472" fill="#000"/>
<rect x="250" y="143" width="1" height="472" fill="#000"/>
<path d="M109 129h1v1h-1zM110 130h1v1h-1zM111 131h1v1h-1zM112 132h1v1h-1zM113 133h1v1h-1zM114 134h1v1h-1zM115 135h1v1h-1zM116 136h1v1h-1zM117 137h1v1h-1zM118 138h1v1h-1zM119 139h1v1h-1zM120 140h1v1h-1zM121 141h1v1h-1zM122 142h1v1h-1zM123 143h1v1h-1z" fill="#000"/>
<path d="M264 129h1v1h-1zM263 130h1v1h-1zM262 131h1v1h-1zM261 132h1v1h-1zM260 133h1v1h-1zM259 134h1v1h-1zM258 135h1v1h-1zM257 136h1v1h-1zM256 137h1v1h-1zM255 138h1v1h-1zM254 139h1v1h-1zM253 140h1v1h-1zM252 141h1v1h-1zM251 142h1v1h-1zM250 143h1v1h-1z" fill="#000"/>
<path d="M109 627h1v1h-1zM110 626h1v1h-1zM111 625h1v1h-1zM112 624h1v1h-1zM113 623h1v1h-1zM114 622h1v1h-1zM115 621h1v1h-1zM116 621h1v1h-1zM117 620h1v1h-1zM118 619h1v1h-1zM119 618h1v1h-1zM120 617h1v1h-1zM121 616h1v1h-1zM122 615h1v1h-1zM123 614h1v1h-1z" fill="#000"/>
<path d="M264 627h1v1h-1zM263 626h1v1h-1zM262 625h1v1h-1zM261 624h1v1h-1zM260 623h1v1h-1zM259 622h1v1h-1zM258 621h1v1h-1zM257 621h1v1h-1zM256 620h1v1h-1zM255 619h1v1h-1zM254 618h1v1h-1zM253 617h1v1h-1zM252 616h1v1h-1zM251 615h1v1h-1zM250 614h1v1h-1z" fill="#000"/>
<rect x="147" y="167" width="80" height="423" fill="#00bfff"/>
<rect x="147" y="167" width="80" height="1" fill="#000"/>
<rect x="147" y="589" width="80" height="1" fill="#000"/>
<rect x="147" y="167" width="1" height="423" fill="#000"/>
<rect x="226" y="167" width="1" height="423" fill="#000"/>
<path d="M123 143h1v1h-1zM124 144h1v1h-1zM125 145h1v1h-1zM126 146h1v1h-1zM127 147h1v1h-1zM128 148h1v1h-1zM129 149h1v1h-1zM130 150h1v1h-1zM131 151h1v1h-1zM132 152h1v1h-1zM133 153h1v1h-1zM134 154h1v1h-1zM135 155h1v1h-1zM136 156h1v1h-1zM137 157h1v1h-1zM138 158h1v1h-1zM139 159h1v1h-1zM140 160h1v1h-1zM141 161h1v1h-1zM142 162h1v1h-1zM143 163h1v1h-1zM144 164h1v1h-1zM145 165h1v1h-1zM146 166h1v1h-1zM147 167h1v1h-1z" fill="#000"/>
<path d="M250 143h1v1h-1zM249 144h1v1h-1zM248 145h1v1h-1zM247 146h1v1h-1zM246 147h1v1h-1zM245 148h1v1h-1zM244 149h1v1h-1zM243 150h1v1h-1zM242 151h1v1h-1zM241 152h1v1h-1zM240 153h1v1h-1zM239 154h1v1h-1zM238 155h1v1h-1zM237 156h1v1h-1zM236 157h1v1h-1zM235 158h1v1h-1zM234 159h1v1h-1zM233 160h1v1h-1zM232 161h1v1h-1zM231 162h1v1h-1zM230 163h1v1h-1zM229 164h1v1h-1zM228 165h1v1h-1zM227 166h1v1h-1zM226 167h1v1h-1z" fill="#000"/>
<path d="M123 614h1v1h-1zM124 613h1v1h-1zM125 612h1v1h-1zM126 611h1v1h-1zM127 610h1v1h-1zM128 609h1v1h-1zM129 608h1v1h-1zM130 607h1v1h-1zM131 606h1v1h-1zM132 605h1v1h-1zM133 604h1v1h-1zM134 603h1v1h-1zM135 602h1v1h-1zM135 601h1v1h-1zM136 600h1v1h-1zM137 599h1v1h-1zM138 598h1v1h-1zM139 597h1v1h-1zM140 596h1v1h-1zM141 595h1v1h-1zM142 594h1v1h-1zM143 593h1v1h-1zM144 592h1v1h-1zM145 591h1v1h-1zM146 590h1v1h-1zM147 589h1v1h-1z" fill="#000"/>
<path d="M250 614h1v1h-1zM249 613h1v1h-1zM248 612h1v1h-1zM247 611h1v1h-1zM246 610h1v1h-1zM245 609h1v1h-1zM244 608h1v1h-1zM243 607h1v1h-1zM242 606h1v1h-1zM241 605h1v1h-1zM240 604h1v1h-1zM239 603h1v1h-1zM238 602h1v1h-1zM238 601h1v1h-1zM237 600h1v1h-1zM236 599h1v1h-1zM235 598h1v1h-1zM234 597h1v1h-1zM233 596h1v1h-1zM232 595h1v1h-1zM231 594h1v1h-1zM230 593h1v1h-1zM229 592h1v1h-1zM228 591h1v1h-1zM227 590h1v1h-1zM226 589h1v1h-1z" fill="#000"/>
<rect x="148" y="221" width="78" height="8" fill="#fff"/>
<rect x="147" y="220" width="80" height="1" fill="#000"/>
<rect x="147" y="229" width="80" height="1" fill="#000"/>
<rect x="148" y="298" width="78" height="7" fill="#fff"/>
<rect x="147" y="297" width="80" height="1" fill="#000"/>
<rect x="147" y="305" width="80" height="1" fill="#000"/>
<rect x="148" y="375" width="78" height="7" fill="#fff"/>
<rect x="147" y="374" width="80" height="1" fill="#000"/>
<rect x="147" y="382" width="80" height="1" fill="#000"/>
<rect x="148" y="452" width="78" height="7" fill="#fff"/>
<rect x="147" y="451" width="80" height="1" fill="#000"/>
<rect x="147" y="459" width="80" height="1" fill="#000"/>
<rect x="148" y="528" width="78" height="8" fill="#fff"/>
<rect x="147" y="527" width="80" height="1" fill="#000"/>
<rect x="147" y="536" width="80" height="1" fill="#000"/>
<path d="M130 150h1v1h-1zM130 151h1v1h-1zM131 152h1v1h-1zM131 153h1v1h-1zM132 154h1v1h-1zM132 155h1v1h-1zM133 156h1v1h-1zM133 157h1v1h-1zM134 158h1v1h-1zM134 159h1v1h-1zM135 160h1v1h-1zM135 161h1v1h-1zM136 162h1v1h-1zM136 163h1v1h-1zM137 164h1v1h-1zM137 165h1v1h-1zM138 166h1v1h-1zM138 167h1v1h-1zM139 168h1v1h-1zM139 169h1v1h-1zM140 170h1v1h-1zM140 171h1v1h-1zM141 172h1v1h-1zM141 173h1v1h-1zM142 174h1v1h-1zM142 175h1v1h-1zM143 176h1v1h-1zM143 177h1v1h-1zM144 178h1v1h-1zM144 179h1v1h-1zM145 180h1v1h-1zM145 181h1v1h-1zM146 182h1v1h-1zM146 183h1v1h-1zM147 184h1v1h-1zM147 185h1v1h-1zM148 186h1v1h-1zM148 187h1v1h-1zM149 188h1v1h-1zM149 189h1v1h-1zM150 190h1v1h-1zM150 191h1v1h-1zM151 192h1v1h-1zM151 193h1v1h-1zM152 194h1v1h-1zM152 195h1v1h-1zM153 196h1v1h-1zM153 197h1v1h-1zM154 198h1v1h-1zM154 199h1v1h-1zM155 200h1v1h-1zM155 201h1v1h-1zM156 202h1v1h-1zM156 203h1v1h-1zM157 204h1v1h-1zM157 205h1v1h-1zM158 206h1v1h-1zM158 207h1v1h-1zM159 208h1v1h-1zM159 209h1v1h-1zM160 210h1v1h-1zM160 211h1v1h-1zM161 212h1v1h-1zM161 213h1v1h-1zM162 214h1v1h-1zM162 215h1v1h-1zM163 216h1v1h-1zM163 217h1v1h-1zM164 218h1v1h-1zM164 219h1v1h-1zM165 220h1v1h-1zM165 221h1v1h-1zM166 222h1v1h-1zM166 223h1v1h-1zM167 224h1v1h-1zM167 225h1v1h-1zM168 226h1v1h-1zM168 227h1v1h-1zM169 228h1v1h-1zM169 229h1v1h-1zM170 230h1v1h-1zM170 231h1v1h-1zM171 232h1v1h-1zM171 233h1v1h-1zM172 234h1v1h-1zM172 235h1v1h-1zM173 236h1v1h-1zM173 237h1v1h-1zM174 238h1v1h-1zM174 239h1v1h-1zM175 240h1v1h-1zM175 241h1v1h-1zM176 242h1v1h-1zM176 243h1v1h-1zM177 244h1v1h-1zM177 245h1v1h-1zM178 246h1v1h-1zM178 247h1v1h-1zM179 248h1v1h-1zM179 249h1v1h-1zM180 250h1v1h-1zM180 251h1v1h-1zM181 252h1v1h-1zM181 253h1v1h-1zM182 254h1v1h-1zM182 255h1v1h-1zM183 256h1v1h-1zM183 257h1v1h-1zM184 258h1v1h-1zM184 259h1v1h-1zM185 260h1v1h-1zM185 261h1v1h-1zM186 262h1v1h-1zM186 263h1v1h-1zM187 264h1v1h-1zM187 265h1v1h-1zM188 266h1v1h-1zM188 267h1v1h-1zM189 268h1v1h-1zM189 269h1v1h-1zM190 270h1v1h-1zM190 271h1v1h-1zM191 272h1v1h-1zM191 273h1v1h-1zM192 274h1v1h-1zM192 275h1v1h-1zM193 276h1v1h-1zM193 277h1v1h-1zM194 278h1v1h-1zM194 279h1v1h-1zM195 280h1v1h-1zM195 281h1v1h-1zM196 282h1v1h-1zM196 283h1v1h-1zM197 284h1v1h-1zM197 285h1v1h-1zM198 286h1v1h-1zM198 287h1v1h-1zM199 288h1v1h-1zM199 289h1v1h-1zM200 290h1v1h-1zM200 291h1v1h-1zM201 292h1v1h-1zM201 293h1v1h-1zM202 294h1v1h-1zM202 295h1v1h-1zM203 296h1v1h-1zM203 297h1v1h-1zM204 298h1v1h-1zM204 299h1v1h-1zM205 300h1v1h-1zM205 301h1v1h-1zM206 302h1v1h-1zM206 303h1v1h-1zM207 304h1v1h-1zM207 305h1v1h-1zM208 306h1v1h-1zM208 307h1v1h-1zM209 308h1v1h-1zM209 309h1v1h-1zM210 310h1v1h-1zM210 311h1v1h-1zM211 312h1v1h-1zM211 313h1v1h-1zM212 314h1v1h-1zM212 315h1v1h-1zM213 316h1v1h-1zM213 317h1v1h-1zM214 318h1v1h-1zM214 319h1v1h-1zM215 320h1v1h-1zM215 321h1v1h-1zM216 322h1v1h-1zM216 323h1v1h-1zM217 324h1v1h-1zM217 325h1v1h-1zM218 326h1v1h-1zM218 327h1v1h-1zM219 328h1v1h-1zM219 329h1v1h-1zM220 330h1v1h-1zM220 331h1v1h-1zM221 332h1v1h-1zM221 333h1v1h-1zM222 334h1v1h-1zM222 335h1v1h-1zM223 336h1v1h-1zM223 337h1v1h-1zM224 338h1v1h-1zM224 339h1v1h-1zM225 340h1v1h-1zM225 341h1v1h-1zM226 342h1v1h-1zM226 343h1v1h-1zM227 344h1v1h-1zM227 345h1v1h-1zM228 346h1v1h-1zM228 347h1v1h-1zM229 348h1v1h-1zM229 349h1v1h-1zM230 350h1v1h-1zM230 351h1v1h-1zM231 352h1v1h-1zM231 353h1v1h-1zM232 354h1v1h-1zM232 355h1v1h-1zM233 356h1v1h-1zM233 357h1v1h-1zM234 358h1v1h-1zM234 359h1v1h-1zM235 360h1v1h-1zM235 361h1v1h-1zM236 362h1v1h-1zM236 363h1v1h-1zM237 364h1v1h-1zM237 365h1v1h-1zM238 366h1v1h-1zM238 367h1v1h-1zM239 368h1v1h-1zM239 369h1v1h-1zM240 370h1v1h-1zM240 371h1v1h-1zM241 372h1v1h-1zM241 373h1v1h-1zM242 374h1v1h-1zM242 375h1v1h-1zM243 376h1v1h-1zM243 377h1v1h-1zM244 378h1v1h-1z" fill="#000"/>
<path d="M244 378h1v1h-1zM244 379h1v1h-1zM243 380h1v1h-1zM243 381h1v1h-1zM242 382h1v1h-1zM242 383h1v1h-1zM241 384h1v1h-1zM241 385h1v1h-1zM240 386h1v1h-1zM240 387h1v1h-1zM239 388h1v1h-1zM239 389h1v1h-1zM238 390h1v1h-1zM238 391h1v1h-1zM237 392h1v1h-1zM237 393h1v1h-1zM236 394h1v1h-1zM236 395h1v1h-1zM235 396h1v1h-1zM235 397h1v1h-1zM234 398h1v1h-1zM234 399h1v1h-1zM233 400h1v1h-1zM233 401h1v1h-1zM232 402h1v1h-1zM232 403h1v1h-1zM231 404h1v1h-1zM231 405h1v1h-1zM230 406h1v1h-1zM230 407h1v1h-1zM229 408h1v1h-1zM229 409h1v1h-1zM228 410h1v1h-1zM228 411h1v1h-1zM227 412h1v1h-1zM227 413h1v1h-1zM226 414h1v1h-1zM226 415h1v1h-1zM225 416h1v1h-1zM225 417h1v1h-1zM224 418h1v1h-1zM224 419h1v1h-1zM223 420h1v1h-1zM223 421h1v1h-1zM222 422h1v1h-1zM222 423h1v1h-1zM221 424h1v1h-1zM221 425h1v1h-1zM220 426h1v1h-1zM220 427h1v1h-1zM219 428h1v1h-1zM219 429h1v1h-1zM218 430h1v1h-1zM218 431h1v1h-1zM217 432h1v1h-1zM217 433h1v1h-1zM216 434h1v1h-1zM216 435h1v1h-1zM215 436h1v1h-1zM215 437h1v1h-1zM214 438h1v1h-1zM214 439h1v1h-1zM213 440h1v1h-1zM213 441h1v1h-1zM212 442h1v1h-1zM212 443h1v1h-1zM211 444h1v1h-1zM211 445h1v1h-1zM210 446h1v1h-1zM210 447h1v1h-1zM209 448h1v1h-1zM209 449h1v1h-1zM208 450h1v1h-1zM208 451h1v1h-1zM207 452h1v1h-1zM207 453h1v1h-1zM206 454h1v1h-1zM206 455h1v1h-1zM205 456h1v1h-1zM205 457h1v1h-1zM204 458h1v1h-1zM204 459h1v1h-1zM203 460h1v1h-1zM203 461h1v1h-1zM202 462h1v1h-1zM202 463h1v1h-1zM201 464h1v1h-1zM201 465h1v1h-1zM200 466h1v1h-1zM200 467h1v1h-1zM199 468h1v1h-1zM199 469h1v1h-1zM198 470h1v1h-1zM198 471h1v1h-1zM197 472h1v1h-1zM197 473h1v1h-1zM196 474h1v1h-1zM196 475h1v1h-1zM195 476h1v1h-1zM195 477h1v1h-1zM194 478h1v1h-1zM194 479h1v1h-1zM193 480h1v1h-1zM193 481h1v1h-1zM192 482h1v1h-1zM192 483h1v1h-1zM191 484h1v1h-1zM191 485h1v1h-1zM190 486h1v1h-1zM190 487h1v1h-1zM189 488h1v1h-1zM189 489h1v1h-1zM188 490h1v1h-1zM188 491h1v1h-1zM187 492h1v1h-1zM187 493h1v1h-1zM186 494h1v1h-1zM186 495h1v1h-1zM185 496h1v1h-1zM185 497h1v1h-1zM184 498h1v1h-1zM184 499h1v1h-1zM183 500h1v1h-1zM183 501h1v1h-1zM182 502h1v1h-1zM182 503h1v1h-1zM181 504h1v1h-1zM181 505h1v1h-1zM180 506h1v1h-1zM180 507h1v1h-1zM179 508h1v1h-1zM179 509h1v1h-1zM178 510h1v1h-1zM178 511h1v1h-1zM177 512h1v1h-1zM177 513h1v1h-1zM176 514h1v1h-1zM176 515h1v1h-1zM175 516h1v1h-1zM175 517h1v1h-1zM174 518h1v1h-1zM174 519h1v1h-1zM173 520h1v1h-1zM173 521h1v1h-1zM172 522h1v1h-1zM172 523h1v1h-1zM171 524h1v1h-1zM171 525h1v1h-1zM170 526h1v1h-1zM170 527h1v1h-1zM169 528h1v1h-1zM169 529h1v1h-1zM168 530h1v1h-1zM168 531h1v1h-1zM167 532h1v1h-1zM167 533h1v1h-1zM166 534h1v1h-1zM166 535h1v1h-1zM165 536h1v1h-1zM165 537h1v1h-1zM164 538h1v1h-1zM164 539h1v1h-1zM163 540h1v1h-1zM163 541h1v1h-1zM162 542h1v1h-1zM162 543h1v1h-1zM161 544h1v1h-1zM161 545h1v1h-1zM160 546h1v1h-1zM160 547h1v1h-1zM159 548h1v1h-1zM159 549h1v1h-1zM158 550h1v1h-1zM158 551h1v1h-1zM157 552h1v1h-1zM157 553h1v1h-1zM156 554h1v1h-1zM156 555h1v1h-1zM155 556h1v1h-1zM155 557h1v1h-1zM154 558h1v1h-1zM154 559h1v1h-1zM153 560h1v1h-1zM153 561h1v1h-1zM152 562h1v1h-1zM152 563h1v1h-1zM151 564h1v1h-1zM151 565h1v1h-1zM150 566h1v1h-1zM150 567h1v1h-1zM149 568h1v1h-1zM149 569h1v1h-1zM148 570h1v1h-1zM148 571h1v1h-1zM147 572h1v1h-1zM147 573h1v1h-1zM146 574h1v1h-1zM146 575h1v1h-1zM145 576h1v1h-1zM145 577h1v1h-1zM144 578h1v1h-1zM144 579h1v1h-1zM143 580h1v1h-1zM143 581h1v1h-1zM142 582h1v1h-1zM142 583h1v1h-1zM141 584h1v1h-1zM141 585h1v1h-1zM140 586h1v1h-1zM140 587h1v1h-1zM139 588h1v1h-1zM139 589h1v1h-1zM138 590h1v1h-1zM138 591h1v1h-1zM137 592h1v1h-1zM137 593h1v1h-1zM136 594h1v1h-1zM136 595h1v1h-1zM135 596h1v1h-1zM135 597h1v1h-1zM134 598h1v1h-1zM134 599h1v1h-1zM133 600h1v1h-1zM133 601h1v1h-1zM132 602h1v1h-1zM132 603h1v1h-1zM131 604h1v1h-1zM131 605h1v1h-1zM130 606h1v1h-1z" fill="#000"/>
<rect x="814" y="143" width="129" height="1" fill="#000"/>
<rect x="814" y="614" width="129" height="1" fill="#000"/>
<rect x="814" y="143" width="1" height="472" fill="#000"/>
<rect x="942" y="143" width="1" height="472" fill="#000"/>
<path d="M800 129h1v1h-1zM801 130h1v1h-1zM802 131h1v1h-1zM803 132h1v1h-1zM804 133h1v1h-1zM805 134h1v1h-1zM806 135h1v1h-1zM807 136h1v1h-1zM808 137h1v1h-1zM809 138h1v1h-1zM810 139h1v1h-1zM811 140h1v1h-1zM812 141h1v1h-1zM813 142h1v1h-1zM814 143h1v1h-1z" fill="#000"/>
<path d="M955 129h1v1h-1zM954 130h1v1h-1zM953 131h1v1h-1zM952 132h1v1h-1zM951 133h1v1h-1zM950 134h1v1h-1zM949 135h1v1h-1zM949 136h1v1h-1zM948 137h1v1h-1zM947 138h1v1h-1zM946 139h1v1h-1zM945 140h1v1h-1zM944 141h1v1h-1zM943 142h1v1h-1zM942 143h1v1h-1z" fill="#000"/>
<path d="M800 627h1v1h-1zM801 626h1v1h-1zM802 625h1v1h-1zM803 624h1v1h-1zM804 623h1v1h-1zM805 622h1v1h-1zM806 621h1v1h-1zM807 621h1v1h-1zM808 620h1v1h-1zM809 619h1v1h-1zM810 618h1v1h-1zM811 617h1v1h-1zM812 616h1v1h-1zM813 615h1v1h-1zM814 614h1v1h-1z" fill="#000"/>
<path d="M955 627h1v1h-1zM954 626h1v1h-1zM953 625h1v1h-1zM952 624h1v1h-1zM951 623h1v1h-1zM950 622h1v1h-1zM949 621h1v1h-1zM948 620h1v1h-1zM947 619h1v1h-1zM946 618h1v1h-1zM945 617h1v1h-1zM944 616h1v1h-1zM943 615h1v1h-1zM942 614h1v1h-1z" fill="#000"/>
<rect x="838" y="167" width="80" height="423" fill="#00bfff"/>
<rect x="838" y="167" width="80" height="1" fill="#000"/>
<rect x="838" y="589" width="80" height="1" fill="#000"/>
<rect x="838" y="167" width="1" height="423" fill="#000"/>
<rect x="917" y="167" width="1" height="423" fill="#000"/>
<path d="M814 143h1v1h-1zM815 144h1v1h-1zM816 145h1v1h-1zM817 146h1v1h-1zM818 147h1v1h-1zM819 148h1v1h-1zM820 149h1v1h-1zM821 150h1v1h-1zM822 151h1v1h-1zM823 152h1v1h-1zM824 153h1v1h-1zM825 154h1v1h-1zM826 155h1v1h-1zM827 156h1v1h-1zM828 157h1v1h-1zM829 158h1v1h-1zM830 159h1v1h-1zM831 160h1v1h-1zM832 161h1v1h-1zM833 162h1v1h-1zM834 163h1v1h-1zM835 164h1v1h-1zM836 165h1v1h-1zM837 166h1v1h-1zM838 167h1v1h-1z" fill="#000"/>
<path d="M942 143h1v1h-1zM941 144h1v1h-1zM940 145h1v1h-1zM939 146h1v1h-1zM938 147h1v1h-1zM937 148h1v1h-1zM936 149h1v1h-1zM935 150h1v1h-1zM934 151h1v1h-1zM933 152h1v1h-1zM932 153h1v1h-1zM931 154h1v1h-1zM930 155h1v1h-1zM929 155h1v1h-1zM928 156h1v1h-1zM927 157h1v1h-1zM926 158h1v1h-1zM925 159h1v1h-1zM924 160h1v1h-1zM923 161h1v1h-1zM922 162h1v1h-1zM921 163h1v1h-1zM920 164h1v1h-1zM919 165h1v1h-1zM918 166h1v1h-1zM917 167h1v1h-1z" fill="#000"/>
<path d="M814 614h1v1h-1zM815 613h1v1h-1zM816 612h1v1h-1zM817 611h1v1h-1zM818 610h1v1h-1zM819 609h1v1h-1zM820 608h1v1h-1zM821 607h1v1h-1zM822 606h1v1h-1zM823 605h1v1h-1zM824 604h1v1h-1zM825 603h1v1h-1zM826 602h1v1h-1zM826 601h1v1h-1zM827 600h1v1h-1zM828 599h1v1h-1zM829 598h1v1h-1zM830 597h1v1h-1zM831 596h1v1h-1zM832 595h1v1h-1zM833 594h1v1h-1zM834 593h1v1h-1zM835 592h1v1h-1zM836 591h1v1h-1zM837 590h1v1h-1zM838 589h1v1h-1z" fill="#000"/>
<path d="M942 614h1v1h-1zM941 613h1v1h-1zM940 612h1v1h-1zM939 611h1v1h-1zM938 610h1v1h-1zM937 609h1v1h-1zM936 608h1v1h-1zM935 607h1v1h-1zM934 606h1v1h-1zM933 605h1v1h-1zM932 604h1v1h-1zM931 603h1v1h-1zM930 602h1v1h-1zM929 601h1v1h-1zM928 600h1v1h-1zM927 599h1v1h-1zM926 598h1v1h-1zM925 597h1v1h-1zM924 596h1v1h-1zM923 595h1v1h-1zM922 594h1v1h-1zM921 593h1v1h-1zM920 592h1v1h-1zM919 591h1v1h-1zM918 590h1v1h-1zM917 589h1v1h-1z" fill="#000"/>
<rect x="839" y="221" width="78" height="8" fill="#fff"/>
<rect x="838" y="220" width="80" height="1" fill="#000"/>
<rect x="838" y="229" width="80" height="1" fill="#000"/>
<rect x="839" y="298" width="78" height="7" fill="#fff"/>
<rect x="838" y="297" width="80" height="1" fill="#000"/>
<rect x="838" y="305" width="80" height="1" fill="#000"/>
<rect x="839" y="375" width="78" height="7" fill="#fff"/>
<rect x="838" y="374" width="80" height="1" fill="#000"/>
<rect x="838" y="382" width="80" height="1" fill="#000"/>
<rect x="839" y="452" width="78" height="7" fill="#fff"/>
<rect x="838" y="451" width="80" height="1" fill="#000"/>
<rect x="838" y="459" width="80" height="1" fill="#000"/>
<rect x="839" y="528" width="78" height="8" fill="#fff"/>
<rect x="838" y="527" width="80" height="1" fill="#000"/>
<rect x="838" y="536" width="80" height="1" fill="#000"/>
<path d="M934 150h1v1h-1zM934 151h1v1h-1zM933 152h1v1h-1zM933 153h1v1h-1zM932 154h1v1h-1zM932 155h1v1h-1zM931 156h1v1h-1zM931 157h1v1h-1zM930 158h1v1h-1zM930 159h1v1h-1zM929 160h1v1h-1zM929 161h1v1h-1zM928 162h1v1h-1zM928 163h1v1h-1zM927 164h1v1h-1zM927 165h1v1h-1zM926 166h1v1h-1zM926 167h1v1h-1zM925 168h1v1h-1zM925 169h1v1h-1zM924 170h1v1h-1zM924 171h1v1h-1zM923 172h1v1h-1zM923 173h1v1h-1zM922 174h1v1h-1zM922 175h1v1h-1zM921 176h1v1h-1zM921 177h1v1h-1zM920 178h1v1h-1zM920 179h1v1h-1zM919 180h1v1h-1zM919 181h1v1h-1zM918 182h1v1h-1zM918 183h1v1h-1zM917 184h1v1h-1zM917 185h1v1h-1zM916 186h1v1h-1zM916 187h1v1h-1zM915 188h1v1h-1zM915 189h1v1h-1zM914 190h1v1h-1zM914 191h1v1h-1zM913 192h1v1h-1zM913 193h1v1h-1zM912 194h1v1h-1zM912 195h1v1h-1zM911 196h1v1h-1zM911 197h1v1h-1zM910 198h1v1h-1zM910 199h1v1h-1zM909 200h1v1h-1zM909 201h1v1h-1zM908 202h1v1h-1zM908 203h1v1h-1zM907 204h1v1h-1zM907 205h1v1h-1zM906 206h1v1h-1zM906 207h1v1h-1zM905 208h1v1h-1zM905 209h1v1h-1zM904 210h1v1h-1zM904 211h1v1h-1zM903 212h1v1h-1zM903 213h1v1h-1zM902 214h1v1h-1zM902 215h1v1h-1zM901 216h1v1h-1zM901 217h1v1h-1zM900 218h1v1h-1zM900 219h1v1h-1zM899 220h1v1h-1zM899 221h1v1h-1zM898 222h1v1h-1zM898 223h1v1h-1zM897 224h1v1h-1zM897 225h1v1h-1zM896 226h1v1h-1zM896 227h1v1h-1zM895 228h1v1h-1zM895 229h1v1h-1zM894 230h1v1h-1zM894 231h1v1h-1zM893 232h1v1h-1zM893 233h1v1h-1zM892 234h1v1h-1zM892 235h1v1h-1zM891 236h1v1h-1zM891 237h1v1h-1zM890 238h1v1h-1zM890 239h1v1h-1zM889 240h1v1h-1zM889 241h1v1h-1zM888 242h1v1h-1zM888 243h1v1h-1zM887 244h1v1h-1zM887 245h1v1h-1zM886 246h1v1h-1zM886 247h1v1h-1zM885 248h1v1h-1zM885 249h1v1h-1zM884 250h1v1h-1zM884 251h1v1h-1zM883 252h1v1h-1zM883 253h1v1h-1zM882 254h1v1h-1zM882 255h1v1h-1zM881 256h1v1h-1zM881 257h1v1h-1zM880 258h1v1h-1zM880 259h1v1h-1zM879 260h1v1h-1zM879 261h1v1h-1zM878 262h1v1h-1zM878 263h1v1h-1zM877 264h1v1h-1zM877 265h1v1h-1zM876 266h1v1h-1zM876 267h1v1h-1zM875 268h1v1h-1zM875 269h1v1h-1zM874 270h1v1h-1zM874 271h1v1h-1zM873 272h1v1h-1zM873 273h1v1h-1zM872 274h1v1h-1zM872 275h1v1h-1zM871 276h1v1h-1zM871 277h1v1h-1zM870 278h1v1h-1zM870 279h1v1h-1zM869 280h1v1h-1zM869 281h1v1h-1zM868 282h1v1h-1zM868 283h1v1h-1zM867 284h1v1h-1zM867 285h1v1h-1zM866 286h1v1h-1zM866 287h1v1h-1zM865 288h1v1h-1zM865 289h1v1h-1zM864 290h1v1h-1zM864 291h1v1h-1zM863 292h1v1h-1zM863 293h1v1h-1zM862 294h1v1h-1zM862 295h1v1h-1zM861 296h1v1h-1zM861 297h1v1h-1zM860 298h1v1h-1zM860 299h1v1h-1zM859 300h1v1h-1zM859 301h1v1h-1zM858 302h1v1h-1zM858 303h1v1h-1zM857 304h1v1h-1zM857 305h1v1h-1zM856 306h1v1h-1zM856 307h1v1h-1zM855 308h1v1h-1zM855 309h1v1h-1zM854 310h1v1h-1zM854 311h1v1h-1zM853 312h1v1h-1zM853 313h1v1h-1zM852 314h1v1h-1zM852 315h1v1h-1zM851 316h1v1h-1zM851 317h1v1h-1zM850 318h1v1h-1zM850 319h1v1h-1zM849 320h1v1h-1zM849 321h1v1h-1zM848 322h1v1h-1zM848 323h1v1h-1zM847 324h1v1h-1zM847 325h1v1h-1zM846 326h1v1h-1zM846 327h1v1h-1zM845 328h1v1h-1zM845 329h1v1h-1zM844 330h1v1h-1zM844 331h1v1h-1zM843 332h1v1h-1zM843 333h1v1h-1zM842 334h1v1h-1zM842 335h1v1h-1zM841 336h1v1h-1zM841 337h1v1h-1zM840 338h1v1h-1zM840 339h1v1h-1zM839 340h1v1h-1zM839 341h1v1h-1zM838 342h1v1h-1zM838 343h1v1h-1zM837 344h1v1h-1zM837 345h1v1h-1zM836 346h1v1h-1zM836 347h1v1h-1zM835 348h1v1h-1zM835 349h1v1h-1zM834 350h1v1h-1zM834 351h1v1h-1zM833 352h1v1h-1zM833 353h1v1h-1zM832 354h1v1h-1zM832 355h1v1h-1zM831 356h1v1h-1zM831 357h1v1h-1zM830 358h1v1h-1zM830 359h1v1h-1zM829 360h1v1h-1zM829 361h1v1h-1zM828 362h1v1h-1zM828 363h1v1h-1zM827 364h1v1h-1zM827 365h1v1h-1zM826 366h1v1h-1zM826 367h1v1h-1zM825 368h1v1h-1zM825 369h1v1h-1zM824 370h1v1h-1zM824 371h1v1h-1zM823 372h1v1h-1zM823 373h1v1h-1zM822 374h1v1h-1zM822 375h1v1h-1zM821 376h1v1h-1zM821 377h1v1h-1zM820 378h1v1h-1z" fill="#000"/>
<path d="M820 378h1v1h-1zM820 379h1v1h-1zM821 380h1v1h-1zM821 381h1v1h-1zM822 382h1v1h-1zM822 383h1v1h-1zM823 384h1v1h-1zM823 385h1v1h-1zM824 386h1v1h-1zM824 387h1v1h-1zM825 388h1v1h-1zM825 389h1v1h-1zM826 390h1v1h-1zM826 391h1v1h-1zM827 392h1v1h-1zM827 393h1v1h-1zM828 394h1v1h-1zM828 395h1v1h-1zM829 396h1v1h-1zM829 397h1v1h-1zM830 398h1v1h-1zM830 399h1v1h-1zM831 400h1v1h-1zM831 401h1v1h-1zM832 402h1v1h-1zM832 403h1v1h-1zM833 404h1v1h-1zM833 405h1v1h-1zM834 406h1v1h-1zM834 407h1v1h-1zM835 408h1v1h-1zM835 409h1v1h-1zM836 410h1v1h-1zM836 411h1v1h-1zM837 412h1v1h-1zM837 413h1v1h-1zM838 414h1v1h-1zM838 415h1v1h-1zM839 416h1v1h-1zM839 417h1v1h-1zM840 418h1v1h-1zM840 419h1v1h-1zM841 420h1v1h-1zM841 421h1v1h-1zM842 422h1v1h-1zM842 423h1v1h-1zM843 424h1v1h-1zM843 425h1v1h-1zM844 426h1v1h-1zM844 427h1v1h-1zM845 428h1v1h-1zM845 429h1v1h-1zM846 430h1v1h-1zM846 431h1v1h-1zM847 432h1v1h-1zM847 433h1v1h-1zM848 434h1v1h-1zM848 435h1v1h-1zM849 436h1v1h-1zM849 437h1v1h-1zM850 438h1v1h-1zM850 439h1v1h-1zM851 440h1v1h-1zM851 441h1v1h-1zM852 442h1v1h-1zM852 443h1v1h-1zM853 444h1v1h-1zM853 445h1v1h-1zM854 446h1v1h-1zM854 447h1v1h-1zM855 448h1v1h-1zM855 449h1v1h-1zM856 450h1v1h-1zM856 451h1v1h-1zM857 452h1v1h-1zM857 453h1v1h-1zM858 454h1v1h-1zM858 455h1v1h-1zM859 456h1v1h-1zM859 457h1v1h-1zM860 458h1v1h-1zM860 459h1v1h-1zM861 460h1v1h-1zM861 461h1v1h-1zM862 462h1v1h-1zM862 463h1v1h-1zM863 464h1v1h-1zM863 465h1v1h-1zM864 466h1v1h-1zM864 467h1v1h-1zM865 468h1v1h-1zM865 469h1v1h-1zM866 470h1v1h-1zM866 471h1v1h-1zM867 472h1v1h-1zM867 473h1v1h-1zM868 474h1v1h-1zM868 475h1v1h-1zM869 476h1v1h-1zM869 477h1v1h-1zM870 478h1v1h-1zM870 479h1v1h-1zM871 480h1v1h-1zM871 481h1v1h-1zM872 482h1v1h-1zM872 483h1v1h-1zM873 484h1v1h-1zM873 485h1v1h-1zM874 486h1v1h-1zM874 487h1v1h-1zM875 488h1v1h-1zM875 489h1v1h-1zM876 490h1v1h-1zM876 491h1v1h-1zM877 492h1v1h-1zM877 493h1v1h-1zM878 494h1v1h-1zM878 495h1v1h-1zM879 496h1v1h-1zM879 497h1v1h-1zM880 498h1v1h-1zM880 499h1v1h-1zM881 500h1v1h-1zM881 501h1v1h-1zM882 502h1v1h-1zM882 503h1v1h-1zM883 504h1v1h-1zM883 505h1v1h-1zM884 506h1v1h-1zM884 507h1v1h-1zM885 508h1v1h-1zM885 509h1v1h-1zM886 510h1v1h-1zM886 511h1v1h-1zM887 512h1v1h-1zM887 513h1v1h-1zM888 514h1v1h-1zM888 515h1v1h-1zM889 516h1v1h-1zM889 517h1v1h-1zM890 518h1v1h-1zM890 519h1v1h-1zM891 520h1v1h-1zM891 521h1v1h-1zM892 522h1v1h-1zM892 523h1v1h-1zM893 524h1v1h-1zM893 525h1v1h-1zM894 526h1v1h-1zM894 527h1v1h-1zM895 528h1v1h-1zM895 529h1v1h-1zM896 530h1v1h-1zM896 531h1v1h-1zM897 532h1v1h-1zM897 533h1v1h-1zM898 534h1v1h-1zM898 535h1v1h-1zM899 536h1v1h-1zM899 537h1v1h-1zM900 538h1v1h-1zM900 539h1v1h-1zM901 540h1v1h-1zM901 541h1v1h-1zM902 542h1v1h-1zM902 543h1v1h-1zM903 544h1v1h-1zM903 545h1v1h-1zM904 546h1v1h-1zM904 547h1v1h-1zM905 548h1v1h-1zM905 549h1v1h-1zM906 550h1v1h-1zM906 551h1v1h-1zM907 552h1v1h-1zM907 553h1v1h-1zM908 554h1v1h-1zM908 555h1v1h-1zM909 556h1v1h-1zM909 557h1v1h-1zM910 558h1v1h-1zM910 559h1v1h-1zM911 560h1v1h-1zM911 561h1v1h-1zM912 562h1v1h-1zM912 563h1v1h-1zM913 564h1v1h-1zM913 565h1v1h-1zM914 566h1v1h-1zM914 567h1v1h-1zM915 568h1v1h-1zM915 569h1v1h-1zM916 570h1v1h-1zM916 571h1v1h-1zM917 572h1v1h-1zM917 573h1v1h-1zM918 574h1v1h-1zM918 575h1v1h-1zM919 576h1v1h-1zM919 577h1v1h-1zM920 578h1v1h-1zM920 579h1v1h-1zM921 580h1v1h-1zM921 581h1v1h-1zM922 582h1v1h-1zM922 583h1v1h-1zM923 584h1v1h-1zM923 585h1v1h-1zM924 586h1v1h-1zM924 587h1v1h-1zM925 588h1v1h-1zM925 589h1v1h-1zM926 590h1v1h-1zM926 591h1v1h-1zM927 592h1v1h-1zM927 593h1v1h-1zM928 594h1v1h-1zM928 595h1v1h-1zM929 596h1v1h-1zM929 597h1v1h-1zM930 598h1v1h-1zM930 599h1v1h-1zM931 600h1v1h-1zM931 601h1v1h-1zM932 602h1v1h-1zM932 603h1v1h-1zM933 604h1v1h-1zM933 605h1v1h-1zM934 606h1v1h-1z" fill="#000"/>
<rect x="299" y="152" width="468" height="453" fill="#00bfff"/>
<rect x="299" y="152" width="468" height="1" fill="#000"/>
<rect x="299" y="604" width="468" height="1" fill="#000"/>
<rect x="299" y="152" width="1" height="453" fill="#000"/>
<rect x="766" y="152" width="1" height="453" fill="#000"/>
<path d="M275 129h1v1h-1zM276 130h1v1h-1zM277 131h1v1h-1zM278 132h1v1h-1zM279 133h1v1h-1zM280 134h1v1h-1zM281 135h1v1h-1zM282 136h1v1h-1zM283 137h1v1h-1zM284 138h1v1h-1zM285 139h1v1h-1zM286 140h1v1h-1zM287 140h1v1h-1zM288 141h1v1h-1zM289 142h1v1h-1zM290 143h1v1h-1zM291 144h1v1h-1zM292 145h1v1h-1zM293 146h1v1h-1zM294 147h1v1h-1zM295 148h1v1h-1zM296 149h1v1h-1zM297 150h1v1h-1zM298 151h1v1h-1zM299 152h1v1h-1z" fill="#000"/>
<path d="M789 129h1v1h-1zM788 130h1v1h-1zM787 131h1v1h-1zM786 132h1v1h-1zM785 133h1v1h-1zM784 134h1v1h-1zM783 135h1v1h-1zM782 136h1v1h-1zM781 137h1v1h-1zM780 138h1v1h-1zM779 139h1v1h-1zM778 140h1v1h-1zM777 141h1v1h-1zM776 142h1v1h-1zM775 143h1v1h-1zM774 144h1v1h-1zM773 145h1v1h-1zM772 146h1v1h-1zM771 147h1v1h-1zM770 148h1v1h-1zM769 149h1v1h-1zM768 150h1v1h-1zM767 151h1v1h-1zM766 152h1v1h-1z" fill="#000"/>
<path d="M275 627h1v1h-1zM276 626h1v1h-1zM277 625h1v1h-1zM278 624h1v1h-1zM279 623h1v1h-1zM280 622h1v1h-1zM281 621h1v1h-1zM282 620h1v1h-1zM283 619h1v1h-1zM284 618h1v1h-1zM285 617h1v1h-1zM286 616h1v1h-1zM287 616h1v1h-1zM288 615h1v1h-1zM289 614h1v1h-1zM290 613h1v1h-1zM291 612h1v1h-1zM292 611h1v1h-1zM293 610h1v1h-1zM294 609h1v1h-1zM295 608h1v1h-1zM296 607h1v1h-1zM297 606h1v1h-1zM298 605h1v1h-1zM299 604h1v1h-1z" fill="#000"/>
<path d="M789 627h1v1h-1zM788 626h1v1h-1zM787 625h1v1h-1zM786 624h1v1h-1zM785 623h1v1h-1zM784 622h1v1h-1zM783 621h1v1h-1zM782 620h1v1h-1zM781 619h1v1h-1zM780 618h1v1h-1zM779 617h1v1h-1zM778 616h1v1h-1zM777 615h1v1h-1zM776 614h1v1h-1zM775 613h1v1h-1zM774 612h1v1h-1zM773 611h1v1h-1zM772 610h1v1h-1zM771 609h1v1h-1zM770 608h1v1h-1zM769 607h1v1h-1zM768 606h1v1h-1zM767 605h1v1h-1zM766 604h1v1h-1z" fill="#000"/>
<rect x="300" y="221" width="466" height="8" fill="#fff"/>
<rect x="299" y="220" width="468" height="1" fill="#000"/>
<rect x="299" y="229" width="468" height="1" fill="#000"/>
<rect x="300" y="298" width="466" height="7" fill="#fff"/>
<rect x="299" y="297" width="468" height="1" fill="#000"/>
<rect x="299" y="305" width="468" height="1" fill="#000"/>
<rect x="300" y="375" width="466" height="7" fill="#fff"/>
<rect x="299" y="374" width="468" height="1" fill="#000"/>
<rect x="299" y="382" width="468" height="1" fill="#000"/>
<rect x="300" y="452" width="466" height="7" fill="#fff"/>
<rect x="299" y="451" width="468" height="1" fill="#000"/>
<rect x="299" y="459" width="468" height="1" fill="#000"/>
<rect x="300" y="528" width="466" height="8" fill="#fff"/>
<rect x="299" y="527" width="468" height="1" fill="#000"/>
<rect x="299" y="536" width="468" height="1" fill="#000"/>
<rect x="359" y="153" width="8" height="451" fill="#fff"/>
<rect x="358" y="152" width="1" height="453" fill="#000"/>
<rect x="367" y="152" width="1" height="453" fill="#000"/>
<rect x="427" y="153" width="7" height="451" fill="#fff"/>
<rect x="426" y="152" width="1" height="453" fill="#000"/>
<rect x="434" y="152" width="1" height="453" fill="#000"/>
<rect x="495" y="153" width="7" height="451" fill="#fff"/>
<rect x="494" y="152" width="1" height="453" fill="#000"/>
<rect x="502" y="152" width="1" height="453" fill="#000"/>
<rect x="563" y="153" width="7" height="451" fill="#fff"/>
<rect x="562" y="152" width="1" height="453" fill="#000"/>
<rect x="570" y="152" width="1" height="453" fill="#000"/>
<rect x="630" y="153" width="8" height="451" fill="#fff"/>
<rect x="629" y="152" width="1" height="453" fill="#000"/>
<rect x="638" y="152" width="1" height="453" fill="#000"/>
<rect x="698" y="153" width="7" height="451" fill="#fff"/>
<rect x="697" y="152" width="1" height="453" fill="#000"/>
<rect x="705" y="152" width="1" height="453" fill="#000"/>
<defs><filter id="thr" x="-5%" y="-20%" width="110%" height="140%" color-interpolation-filters="sRGB"><feComponentTransfer><feFuncA type="discrete" tableValues="0 0 1 1 1"/></feComponentTransfer></filter></defs>
<g filter="url(#thr)">
<text x="187" y="376" font-size="12.5" fill="#000" text-anchor="middle" textLength="24" lengthAdjust="spacingAndGlyphs">Right</text>
<text x="532.5" y="376" font-size="12.5" fill="#000" text-anchor="middle" textLength="31" lengthAdjust="spacingAndGlyphs">FIXED</text>
<text x="878" y="376" font-size="12.5" fill="#000" text-anchor="middle" textLength="18" lengthAdjust="spacingAndGlyphs">Left</text>
<text x="532.5" y="648" font-size="13.5" fill="#0000ff" text-anchor="middle" textLength="97" lengthAdjust="spacingAndGlyphs">Viewed from Outside</text>
</g>
<rect x="109" y="104" width="65" height="1" fill="#ff0000"/>
<rect x="204" y="104" width="67" height="1" fill="#ff0000"/>
<path d="M181 100h1v1h-1zM182 100h1v1h-1zM183 100h1v1h-1zM184 100h1v1h-1zM185 100h1v1h-1zM181 101h1v1h-1zM181 102h1v1h-1zM181 103h1v1h-1zM182 103h1v1h-1zM183 103h1v1h-1zM184 103h1v1h-1zM185 104h1v1h-1zM185 105h1v1h-1zM185 106h1v1h-1zM181 107h1v1h-1zM185 107h1v1h-1zM182 108h1v1h-1zM183 108h1v1h-1zM184 108h1v1h-1zM188 100h1v1h-1zM189 100h1v1h-1zM190 100h1v1h-1zM187 101h1v1h-1zM191 101h1v1h-1zM187 102h1v1h-1zM191 102h1v1h-1zM187 103h1v1h-1zM191 103h1v1h-1zM187 104h1v1h-1zM191 104h1v1h-1zM187 105h1v1h-1zM191 105h1v1h-1zM187 106h1v1h-1zM191 106h1v1h-1zM187 107h1v1h-1zM191 107h1v1h-1zM188 108h1v1h-1zM189 108h1v1h-1zM190 108h1v1h-1zM194 100h1v1h-1zM195 100h1v1h-1zM196 100h1v1h-1zM193 101h1v1h-1zM197 101h1v1h-1zM193 102h1v1h-1zM197 102h1v1h-1zM193 103h1v1h-1zM197 103h1v1h-1zM193 104h1v1h-1zM197 104h1v1h-1zM193 105h1v1h-1zM197 105h1v1h-1zM193 106h1v1h-1zM197 106h1v1h-1zM193 107h1v1h-1zM197 107h1v1h-1zM194 108h1v1h-1zM195 108h1v1h-1zM196 108h1v1h-1z" fill="#000"/>
<rect x="270" y="104" width="31" height="1" fill="#ff0000"/>
<rect x="331" y="104" width="32" height="1" fill="#ff0000"/>
<path d="M309 100h1v1h-1zM310 100h1v1h-1zM311 100h1v1h-1zM308 101h1v1h-1zM312 101h1v1h-1zM312 102h1v1h-1zM312 103h1v1h-1zM311 104h1v1h-1zM310 105h1v1h-1zM309 106h1v1h-1zM308 107h1v1h-1zM308 108h1v1h-1zM309 108h1v1h-1zM310 108h1v1h-1zM311 108h1v1h-1zM312 108h1v1h-1zM315 100h1v1h-1zM316 100h1v1h-1zM317 100h1v1h-1zM314 101h1v1h-1zM318 101h1v1h-1zM314 102h1v1h-1zM318 102h1v1h-1zM314 103h1v1h-1zM318 103h1v1h-1zM315 104h1v1h-1zM316 104h1v1h-1zM317 104h1v1h-1zM314 105h1v1h-1zM318 105h1v1h-1zM314 106h1v1h-1zM318 106h1v1h-1zM314 107h1v1h-1zM318 107h1v1h-1zM315 108h1v1h-1zM316 108h1v1h-1zM317 108h1v1h-1zM321 100h1v1h-1zM322 100h1v1h-1zM323 100h1v1h-1zM320 101h1v1h-1zM324 101h1v1h-1zM320 102h1v1h-1zM324 102h1v1h-1zM320 103h1v1h-1zM324 103h1v1h-1zM321 104h1v1h-1zM322 104h1v1h-1zM323 104h1v1h-1zM324 104h1v1h-1zM324 105h1v1h-1zM324 106h1v1h-1zM320 107h1v1h-1zM324 107h1v1h-1zM321 108h1v1h-1zM322 108h1v1h-1zM323 108h1v1h-1z" fill="#000"/>
<rect x="362" y="104" width="19" height="1" fill="#ff0000"/>
<rect x="411" y="104" width="20" height="1" fill="#ff0000"/>
<path d="M389 100h1v1h-1zM390 100h1v1h-1zM391 100h1v1h-1zM388 101h1v1h-1zM392 101h1v1h-1zM392 102h1v1h-1zM392 103h1v1h-1zM391 104h1v1h-1zM390 105h1v1h-1zM389 106h1v1h-1zM388 107h1v1h-1zM388 108h1v1h-1zM389 108h1v1h-1zM390 108h1v1h-1zM391 108h1v1h-1zM392 108h1v1h-1zM396 100h1v1h-1zM394 101h1v1h-1zM395 101h1v1h-1zM396 101h1v1h-1zM396 102h1v1h-1zM396 103h1v1h-1zM396 104h1v1h-1zM396 105h1v1h-1zM396 106h1v1h-1zM396 107h1v1h-1zM396 108h1v1h-1zM402 100h1v1h-1zM400 101h1v1h-1zM401 101h1v1h-1zM402 101h1v1h-1zM402 102h1v1h-1zM402 103h1v1h-1zM402 104h1v1h-1zM402 105h1v1h-1zM402 106h1v1h-1zM402 107h1v1h-1zM402 108h1v1h-1z" fill="#000"/>
<rect x="430" y="104" width="19" height="1" fill="#ff0000"/>
<rect x="479" y="104" width="20" height="1" fill="#ff0000"/>
<path d="M457 100h1v1h-1zM458 100h1v1h-1zM459 100h1v1h-1zM456 101h1v1h-1zM460 101h1v1h-1zM460 102h1v1h-1zM460 103h1v1h-1zM459 104h1v1h-1zM458 105h1v1h-1zM457 106h1v1h-1zM456 107h1v1h-1zM456 108h1v1h-1zM457 108h1v1h-1zM458 108h1v1h-1zM459 108h1v1h-1zM460 108h1v1h-1zM464 100h1v1h-1zM462 101h1v1h-1zM463 101h1v1h-1zM464 101h1v1h-1zM464 102h1v1h-1zM464 103h1v1h-1zM464 104h1v1h-1zM464 105h1v1h-1zM464 106h1v1h-1zM464 107h1v1h-1zM464 108h1v1h-1zM470 100h1v1h-1zM468 101h1v1h-1zM469 101h1v1h-1zM470 101h1v1h-1zM470 102h1v1h-1zM470 103h1v1h-1zM470 104h1v1h-1zM470 105h1v1h-1zM470 106h1v1h-1zM470 107h1v1h-1zM470 108h1v1h-1z" fill="#000"/>
<rect x="498" y="104" width="19" height="1" fill="#ff0000"/>
<rect x="547" y="104" width="20" height="1" fill="#ff0000"/>
<path d="M525 100h1v1h-1zM526 100h1v1h-1zM527 100h1v1h-1zM524 101h1v1h-1zM528 101h1v1h-1zM528 102h1v1h-1zM528 103h1v1h-1zM527 104h1v1h-1zM526 105h1v1h-1zM525 106h1v1h-1zM524 107h1v1h-1zM524 108h1v1h-1zM525 108h1v1h-1zM526 108h1v1h-1zM527 108h1v1h-1zM528 108h1v1h-1zM532 100h1v1h-1zM530 101h1v1h-1zM531 101h1v1h-1zM532 101h1v1h-1zM532 102h1v1h-1zM532 103h1v1h-1zM532 104h1v1h-1zM532 105h1v1h-1zM532 106h1v1h-1zM532 107h1v1h-1zM532 108h1v1h-1zM538 100h1v1h-1zM536 101h1v1h-1zM537 101h1v1h-1zM538 101h1v1h-1zM538 102h1v1h-1zM538 103h1v1h-1zM538 104h1v1h-1zM538 105h1v1h-1zM538 106h1v1h-1zM538 107h1v1h-1zM538 108h1v1h-1z" fill="#000"/>
<rect x="566" y="104" width="19" height="1" fill="#ff0000"/>
<rect x="615" y="104" width="20" height="1" fill="#ff0000"/>
<path d="M593 100h1v1h-1zM594 100h1v1h-1zM595 100h1v1h-1zM592 101h1v1h-1zM596 101h1v1h-1zM596 102h1v1h-1zM596 103h1v1h-1zM595 104h1v1h-1zM594 105h1v1h-1zM593 106h1v1h-1zM592 107h1v1h-1zM592 108h1v1h-1zM593 108h1v1h-1zM594 108h1v1h-1zM595 108h1v1h-1zM596 108h1v1h-1zM600 100h1v1h-1zM598 101h1v1h-1zM599 101h1v1h-1zM600 101h1v1h-1zM600 102h1v1h-1zM600 103h1v1h-1zM600 104h1v1h-1zM600 105h1v1h-1zM600 106h1v1h-1zM600 107h1v1h-1zM600 108h1v1h-1zM606 100h1v1h-1zM604 101h1v1h-1zM605 101h1v1h-1zM606 101h1v1h-1zM606 102h1v1h-1zM606 103h1v1h-1zM606 104h1v1h-1zM606 105h1v1h-1zM606 106h1v1h-1zM606 107h1v1h-1zM606 108h1v1h-1z" fill="#000"/>
<rect x="634" y="104" width="18" height="1" fill="#ff0000"/>
<rect x="682" y="104" width="20" height="1" fill="#ff0000"/>
<path d="M660 100h1v1h-1zM661 100h1v1h-1zM662 100h1v1h-1zM659 101h1v1h-1zM663 101h1v1h-1zM663 102h1v1h-1zM663 103h1v1h-1zM662 104h1v1h-1zM661 105h1v1h-1zM660 106h1v1h-1zM659 107h1v1h-1zM659 108h1v1h-1zM660 108h1v1h-1zM661 108h1v1h-1zM662 108h1v1h-1zM663 108h1v1h-1zM667 100h1v1h-1zM665 101h1v1h-1zM666 101h1v1h-1zM667 101h1v1h-1zM667 102h1v1h-1zM667 103h1v1h-1zM667 104h1v1h-1zM667 105h1v1h-1zM667 106h1v1h-1zM667 107h1v1h-1zM667 108h1v1h-1zM673 100h1v1h-1zM671 101h1v1h-1zM672 101h1v1h-1zM673 101h1v1h-1zM673 102h1v1h-1zM673 103h1v1h-1zM673 104h1v1h-1zM673 105h1v1h-1zM673 106h1v1h-1zM673 107h1v1h-1zM673 108h1v1h-1z" fill="#000"/>
<rect x="701" y="104" width="32" height="1" fill="#ff0000"/>
<rect x="763" y="104" width="32" height="1" fill="#ff0000"/>
<path d="M741 100h1v1h-1zM742 100h1v1h-1zM743 100h1v1h-1zM740 101h1v1h-1zM744 101h1v1h-1zM744 102h1v1h-1zM744 103h1v1h-1zM743 104h1v1h-1zM742 105h1v1h-1zM741 106h1v1h-1zM740 107h1v1h-1zM740 108h1v1h-1zM741 108h1v1h-1zM742 108h1v1h-1zM743 108h1v1h-1zM744 108h1v1h-1zM747 100h1v1h-1zM748 100h1v1h-1zM749 100h1v1h-1zM746 101h1v1h-1zM750 101h1v1h-1zM746 102h1v1h-1zM750 102h1v1h-1zM746 103h1v1h-1zM750 103h1v1h-1zM747 104h1v1h-1zM748 104h1v1h-1zM749 104h1v1h-1zM750 104h1v1h-1zM750 105h1v1h-1zM750 106h1v1h-1zM746 107h1v1h-1zM750 107h1v1h-1zM747 108h1v1h-1zM748 108h1v1h-1zM749 108h1v1h-1zM753 100h1v1h-1zM754 100h1v1h-1zM755 100h1v1h-1zM752 101h1v1h-1zM756 101h1v1h-1zM752 102h1v1h-1zM756 102h1v1h-1zM752 103h1v1h-1zM756 103h1v1h-1zM752 104h1v1h-1zM756 104h1v1h-1zM752 105h1v1h-1zM756 105h1v1h-1zM752 106h1v1h-1zM756 106h1v1h-1zM752 107h1v1h-1zM756 107h1v1h-1zM753 108h1v1h-1zM754 108h1v1h-1zM755 108h1v1h-1z" fill="#000"/>
<rect x="794" y="104" width="66" height="1" fill="#ff0000"/>
<rect x="890" y="104" width="66" height="1" fill="#ff0000"/>
<path d="M867 100h1v1h-1zM868 100h1v1h-1zM869 100h1v1h-1zM870 100h1v1h-1zM871 100h1v1h-1zM867 101h1v1h-1zM867 102h1v1h-1zM867 103h1v1h-1zM868 103h1v1h-1zM869 103h1v1h-1zM870 103h1v1h-1zM871 104h1v1h-1zM871 105h1v1h-1zM871 106h1v1h-1zM867 107h1v1h-1zM871 107h1v1h-1zM868 108h1v1h-1zM869 108h1v1h-1zM870 108h1v1h-1zM874 100h1v1h-1zM875 100h1v1h-1zM876 100h1v1h-1zM873 101h1v1h-1zM877 101h1v1h-1zM873 102h1v1h-1zM877 102h1v1h-1zM873 103h1v1h-1zM877 103h1v1h-1zM873 104h1v1h-1zM877 104h1v1h-1zM873 105h1v1h-1zM877 105h1v1h-1zM873 106h1v1h-1zM877 106h1v1h-1zM873 107h1v1h-1zM877 107h1v1h-1zM874 108h1v1h-1zM875 108h1v1h-1zM876 108h1v1h-1zM880 100h1v1h-1zM881 100h1v1h-1zM882 100h1v1h-1zM879 101h1v1h-1zM883 101h1v1h-1zM879 102h1v1h-1zM883 102h1v1h-1zM879 103h1v1h-1zM883 103h1v1h-1zM879 104h1v1h-1zM883 104h1v1h-1zM879 105h1v1h-1zM883 105h1v1h-1zM879 106h1v1h-1zM883 106h1v1h-1zM879 107h1v1h-1zM883 107h1v1h-1zM880 108h1v1h-1zM881 108h1v1h-1zM882 108h1v1h-1z" fill="#ff0000"/>
<rect x="109" y="99" width="1" height="13" fill="#ff0000"/>
<path d="M110 102h1v1h-1zM110 103h1v1h-1zM110 105h1v1h-1zM110 106h1v1h-1zM111 101h1v1h-1zM111 107h1v1h-1z" fill="#ff0000"/>
<rect x="270" y="99" width="1" height="13" fill="#ff0000"/>
<rect x="269" y="102" width="3" height="5" fill="#ff0000"/>
<path d="M267 101h1v1h-1zM268 102h1v1h-1zM272 101h1v1h-1zM267 107h1v1h-1zM268 106h1v1h-1zM272 107h1v1h-1z" fill="#ff0000"/>
<rect x="362" y="99" width="1" height="13" fill="#ff0000"/>
<rect x="361" y="102" width="3" height="5" fill="#ff0000"/>
<path d="M359 101h1v1h-1zM360 102h1v1h-1zM364 101h1v1h-1zM359 107h1v1h-1zM360 106h1v1h-1zM364 107h1v1h-1z" fill="#ff0000"/>
<rect x="430" y="99" width="1" height="13" fill="#ff0000"/>
<rect x="429" y="102" width="3" height="5" fill="#ff0000"/>
<path d="M427 101h1v1h-1zM428 102h1v1h-1zM432 101h1v1h-1zM427 107h1v1h-1zM428 106h1v1h-1zM432 107h1v1h-1z" fill="#ff0000"/>
<rect x="498" y="99" width="1" height="13" fill="#ff0000"/>
<rect x="497" y="102" width="3" height="5" fill="#ff0000"/>
<path d="M495 101h1v1h-1zM496 102h1v1h-1zM500 101h1v1h-1zM495 107h1v1h-1zM496 106h1v1h-1zM500 107h1v1h-1z" fill="#ff0000"/>
<rect x="566" y="99" width="1" height="13" fill="#ff0000"/>
<rect x="565" y="102" width="3" height="5" fill="#ff0000"/>
<path d="M563 101h1v1h-1zM564 102h1v1h-1zM568 101h1v1h-1zM563 107h1v1h-1zM564 106h1v1h-1zM568 107h1v1h-1z" fill="#ff0000"/>
<rect x="634" y="99" width="1" height="13" fill="#ff0000"/>
<rect x="633" y="102" width="3" height="5" fill="#ff0000"/>
<path d="M631 101h1v1h-1zM632 102h1v1h-1zM636 101h1v1h-1zM631 107h1v1h-1zM632 106h1v1h-1zM636 107h1v1h-1z" fill="#ff0000"/>
<rect x="701" y="99" width="1" height="13" fill="#ff0000"/>
<rect x="700" y="102" width="3" height="5" fill="#ff0000"/>
<path d="M698 101h1v1h-1zM699 102h1v1h-1zM703 101h1v1h-1zM698 107h1v1h-1zM699 106h1v1h-1zM703 107h1v1h-1z" fill="#ff0000"/>
<rect x="794" y="99" width="1" height="13" fill="#ff0000"/>
<rect x="793" y="102" width="3" height="5" fill="#ff0000"/>
<path d="M791 101h1v1h-1zM792 102h1v1h-1zM796 101h1v1h-1zM791 107h1v1h-1zM792 106h1v1h-1zM796 107h1v1h-1z" fill="#ff0000"/>
<rect x="955" y="99" width="1" height="13" fill="#ff0000"/>
<path d="M954 103h1v1h-1zM954 105h1v1h-1zM953 101h1v1h-1zM953 102h1v1h-1zM953 106h1v1h-1zM953 107h1v1h-1z" fill="#ff0000"/>
<rect x="68" y="129" width="1" height="41" fill="#ff0000"/>
<rect x="68" y="183" width="1" height="42" fill="#ff0000"/>
<path d="M61 172h1v1h-1zM62 172h1v1h-1zM63 172h1v1h-1zM60 173h1v1h-1zM64 173h1v1h-1zM64 174h1v1h-1zM64 175h1v1h-1zM63 176h1v1h-1zM62 177h1v1h-1zM61 178h1v1h-1zM60 179h1v1h-1zM60 180h1v1h-1zM61 180h1v1h-1zM62 180h1v1h-1zM63 180h1v1h-1zM64 180h1v1h-1zM67 172h1v1h-1zM68 172h1v1h-1zM69 172h1v1h-1zM66 173h1v1h-1zM70 173h1v1h-1zM66 174h1v1h-1zM70 174h1v1h-1zM66 175h1v1h-1zM70 175h1v1h-1zM67 176h1v1h-1zM68 176h1v1h-1zM69 176h1v1h-1zM70 176h1v1h-1zM70 177h1v1h-1zM70 178h1v1h-1zM66 179h1v1h-1zM70 179h1v1h-1zM67 180h1v1h-1zM68 180h1v1h-1zM69 180h1v1h-1zM72 172h1v1h-1zM73 172h1v1h-1zM74 172h1v1h-1zM75 172h1v1h-1zM76 172h1v1h-1zM76 173h1v1h-1zM75 174h1v1h-1zM75 175h1v1h-1zM74 176h1v1h-1zM74 177h1v1h-1zM73 178h1v1h-1zM73 179h1v1h-1zM73 180h1v1h-1z" fill="#000"/>
<rect x="68" y="224" width="1" height="32" fill="#ff0000"/>
<rect x="68" y="269" width="1" height="33" fill="#ff0000"/>
<path d="M61 258h1v1h-1zM62 258h1v1h-1zM63 258h1v1h-1zM60 259h1v1h-1zM64 259h1v1h-1zM64 260h1v1h-1zM64 261h1v1h-1zM63 262h1v1h-1zM62 263h1v1h-1zM61 264h1v1h-1zM60 265h1v1h-1zM60 266h1v1h-1zM61 266h1v1h-1zM62 266h1v1h-1zM63 266h1v1h-1zM64 266h1v1h-1zM67 258h1v1h-1zM68 258h1v1h-1zM69 258h1v1h-1zM66 259h1v1h-1zM70 259h1v1h-1zM70 260h1v1h-1zM70 261h1v1h-1zM68 262h1v1h-1zM69 262h1v1h-1zM70 263h1v1h-1zM70 264h1v1h-1zM66 265h1v1h-1zM70 265h1v1h-1zM67 266h1v1h-1zM68 266h1v1h-1zM69 266h1v1h-1zM73 258h1v1h-1zM74 258h1v1h-1zM75 258h1v1h-1zM72 259h1v1h-1zM76 259h1v1h-1zM72 260h1v1h-1zM76 260h1v1h-1zM72 261h1v1h-1zM76 261h1v1h-1zM73 262h1v1h-1zM74 262h1v1h-1zM75 262h1v1h-1zM76 262h1v1h-1zM76 263h1v1h-1zM76 264h1v1h-1zM72 265h1v1h-1zM76 265h1v1h-1zM73 266h1v1h-1zM74 266h1v1h-1zM75 266h1v1h-1z" fill="#000"/>
<rect x="68" y="301" width="1" height="32" fill="#ff0000"/>
<rect x="68" y="346" width="1" height="33" fill="#ff0000"/>
<path d="M61 335h1v1h-1zM62 335h1v1h-1zM63 335h1v1h-1zM60 336h1v1h-1zM64 336h1v1h-1zM64 337h1v1h-1zM64 338h1v1h-1zM63 339h1v1h-1zM62 340h1v1h-1zM61 341h1v1h-1zM60 342h1v1h-1zM60 343h1v1h-1zM61 343h1v1h-1zM62 343h1v1h-1zM63 343h1v1h-1zM64 343h1v1h-1zM67 335h1v1h-1zM68 335h1v1h-1zM69 335h1v1h-1zM66 336h1v1h-1zM70 336h1v1h-1zM70 337h1v1h-1zM70 338h1v1h-1zM68 339h1v1h-1zM69 339h1v1h-1zM70 340h1v1h-1zM70 341h1v1h-1zM66 342h1v1h-1zM70 342h1v1h-1zM67 343h1v1h-1zM68 343h1v1h-1zM69 343h1v1h-1zM73 335h1v1h-1zM74 335h1v1h-1zM75 335h1v1h-1zM72 336h1v1h-1zM76 336h1v1h-1zM72 337h1v1h-1zM76 337h1v1h-1zM72 338h1v1h-1zM76 338h1v1h-1zM73 339h1v1h-1zM74 339h1v1h-1zM75 339h1v1h-1zM76 339h1v1h-1zM76 340h1v1h-1zM76 341h1v1h-1zM72 342h1v1h-1zM76 342h1v1h-1zM73 343h1v1h-1zM74 343h1v1h-1zM75 343h1v1h-1z" fill="#000"/>
<rect x="68" y="378" width="1" height="32" fill="#ff0000"/>
<rect x="68" y="423" width="1" height="33" fill="#ff0000"/>
<path d="M61 412h1v1h-1zM62 412h1v1h-1zM63 412h1v1h-1zM60 413h1v1h-1zM64 413h1v1h-1zM64 414h1v1h-1zM64 415h1v1h-1zM63 416h1v1h-1zM62 417h1v1h-1zM61 418h1v1h-1zM60 419h1v1h-1zM60 420h1v1h-1zM61 420h1v1h-1zM62 420h1v1h-1zM63 420h1v1h-1zM64 420h1v1h-1zM67 412h1v1h-1zM68 412h1v1h-1zM69 412h1v1h-1zM66 413h1v1h-1zM70 413h1v1h-1zM70 414h1v1h-1zM70 415h1v1h-1zM68 416h1v1h-1zM69 416h1v1h-1zM70 417h1v1h-1zM70 418h1v1h-1zM66 419h1v1h-1zM70 419h1v1h-1zM67 420h1v1h-1zM68 420h1v1h-1zM69 420h1v1h-1zM73 412h1v1h-1zM74 412h1v1h-1zM75 412h1v1h-1zM72 413h1v1h-1zM76 413h1v1h-1zM72 414h1v1h-1zM76 414h1v1h-1zM72 415h1v1h-1zM76 415h1v1h-1zM73 416h1v1h-1zM74 416h1v1h-1zM75 416h1v1h-1zM76 416h1v1h-1zM76 417h1v1h-1zM76 418h1v1h-1zM72 419h1v1h-1zM76 419h1v1h-1zM73 420h1v1h-1zM74 420h1v1h-1zM75 420h1v1h-1z" fill="#000"/>
<rect x="68" y="455" width="1" height="32" fill="#ff0000"/>
<rect x="68" y="500" width="1" height="33" fill="#ff0000"/>
<path d="M61 489h1v1h-1zM62 489h1v1h-1zM63 489h1v1h-1zM60 490h1v1h-1zM64 490h1v1h-1zM64 491h1v1h-1zM64 492h1v1h-1zM63 493h1v1h-1zM62 494h1v1h-1zM61 495h1v1h-1zM60 496h1v1h-1zM60 497h1v1h-1zM61 497h1v1h-1zM62 497h1v1h-1zM63 497h1v1h-1zM64 497h1v1h-1zM67 489h1v1h-1zM68 489h1v1h-1zM69 489h1v1h-1zM66 490h1v1h-1zM70 490h1v1h-1zM70 491h1v1h-1zM70 492h1v1h-1zM68 493h1v1h-1zM69 493h1v1h-1zM70 494h1v1h-1zM70 495h1v1h-1zM66 496h1v1h-1zM70 496h1v1h-1zM67 497h1v1h-1zM68 497h1v1h-1zM69 497h1v1h-1zM73 489h1v1h-1zM74 489h1v1h-1zM75 489h1v1h-1zM72 490h1v1h-1zM76 490h1v1h-1zM72 491h1v1h-1zM76 491h1v1h-1zM72 492h1v1h-1zM76 492h1v1h-1zM73 493h1v1h-1zM74 493h1v1h-1zM75 493h1v1h-1zM76 493h1v1h-1zM76 494h1v1h-1zM76 495h1v1h-1zM72 496h1v1h-1zM76 496h1v1h-1zM73 497h1v1h-1zM74 497h1v1h-1zM75 497h1v1h-1z" fill="#000"/>
<rect x="68" y="532" width="1" height="41" fill="#ff0000"/>
<rect x="68" y="586" width="1" height="42" fill="#ff0000"/>
<path d="M61 575h1v1h-1zM62 575h1v1h-1zM63 575h1v1h-1zM60 576h1v1h-1zM64 576h1v1h-1zM64 577h1v1h-1zM64 578h1v1h-1zM63 579h1v1h-1zM62 580h1v1h-1zM61 581h1v1h-1zM60 582h1v1h-1zM60 583h1v1h-1zM61 583h1v1h-1zM62 583h1v1h-1zM63 583h1v1h-1zM64 583h1v1h-1zM67 575h1v1h-1zM68 575h1v1h-1zM69 575h1v1h-1zM66 576h1v1h-1zM70 576h1v1h-1zM66 577h1v1h-1zM70 577h1v1h-1zM66 578h1v1h-1zM70 578h1v1h-1zM67 579h1v1h-1zM68 579h1v1h-1zM69 579h1v1h-1zM70 579h1v1h-1zM70 580h1v1h-1zM70 581h1v1h-1zM66 582h1v1h-1zM70 582h1v1h-1zM67 583h1v1h-1zM68 583h1v1h-1zM69 583h1v1h-1zM72 575h1v1h-1zM73 575h1v1h-1zM74 575h1v1h-1zM75 575h1v1h-1zM76 575h1v1h-1zM76 576h1v1h-1zM75 577h1v1h-1zM75 578h1v1h-1zM74 579h1v1h-1zM74 580h1v1h-1zM73 581h1v1h-1zM73 582h1v1h-1zM73 583h1v1h-1z" fill="#ff0000"/>
<rect x="63" y="224" width="13" height="1" fill="#ff0000"/>
<rect x="67" y="223" width="3" height="4" fill="#ff0000"/>
<path d="M66 222h1v1h-1zM70 222h1v1h-1zM66 226h1v1h-1zM66 227h1v1h-1zM70 227h1v1h-1z" fill="#ff0000"/>
<rect x="63" y="301" width="13" height="1" fill="#ff0000"/>
<rect x="67" y="300" width="3" height="4" fill="#ff0000"/>
<path d="M66 299h1v1h-1zM70 299h1v1h-1zM66 303h1v1h-1zM66 304h1v1h-1zM70 304h1v1h-1z" fill="#ff0000"/>
<rect x="63" y="378" width="13" height="1" fill="#ff0000"/>
<rect x="67" y="377" width="3" height="4" fill="#ff0000"/>
<path d="M66 376h1v1h-1zM70 376h1v1h-1zM66 380h1v1h-1zM66 381h1v1h-1zM70 381h1v1h-1z" fill="#ff0000"/>
<rect x="63" y="455" width="13" height="1" fill="#ff0000"/>
<rect x="67" y="454" width="3" height="4" fill="#ff0000"/>
<path d="M66 453h1v1h-1zM70 453h1v1h-1zM66 457h1v1h-1zM66 458h1v1h-1zM70 458h1v1h-1z" fill="#ff0000"/>
<rect x="63" y="532" width="13" height="1" fill="#ff0000"/>
<rect x="67" y="531" width="3" height="4" fill="#ff0000"/>
<path d="M66 530h1v1h-1zM70 530h1v1h-1zM66 534h1v1h-1zM66 535h1v1h-1zM70 535h1v1h-1z" fill="#ff0000"/>
<rect x="63" y="627" width="13" height="1" fill="#ff0000"/>
<path d="M67 626h1v1h-1zM69 626h1v1h-1zM66 625h1v1h-1zM70 625h1v1h-1z" fill="#ff0000"/>
<rect x="44" y="100" width="25" height="7" fill="#fff"/>
<rect x="44" y="100" width="6" height="32" fill="#fff"/>
<rect x="44" y="101" width="25" height="1" fill="#000"/>
<rect x="44" y="101" width="1" height="30" fill="#000"/>
<rect x="50" y="107" width="19" height="22" fill="#00ffff"/>
<defs><pattern id="dc" x="0" y="0" width="2" height="2" patternUnits="userSpaceOnUse"><rect width="2" height="2" fill="#00ffff"/><rect x="0" y="0" width="1" height="1" fill="#fff"/><rect x="1" y="1" width="1" height="1" fill="#fff"/></pattern></defs>
<rect x="51" y="108" width="18" height="4" fill="url(#dc)"/>
<rect x="51" y="117" width="18" height="7" fill="url(#dc)"/>
<rect x="51" y="112" width="18" height="1" fill="#0000ff"/>
<rect x="51" y="116" width="18" height="1" fill="#0000ff"/>
<rect x="51" y="124" width="18" height="1" fill="#0000ff"/>
<rect x="51" y="128" width="18" height="1" fill="#0000ff"/>
<rect x="50" y="107" width="19" height="1" fill="#000"/>
<rect x="50" y="107" width="1" height="22" fill="#000"/>
<path d="M46 114h1v1h-1zM49 114h1v1h-1zM52 114h1v1h-1zM55 114h1v1h-1zM46 126h1v1h-1zM49 126h1v1h-1zM52 126h1v1h-1zM55 126h1v1h-1z" fill="#0000ff"/>
<rect x="36" y="114" width="7" height="1" fill="#0000ff"/>
<rect x="36" y="126" width="7" height="1" fill="#0000ff"/>
<rect x="39" y="115" width="1" height="11" fill="#ff0000"/>
<path d="M38 116h1v1h-1zM40 116h1v1h-1zM37 117h1v1h-1zM38 117h1v1h-1zM40 117h1v1h-1zM41 117h1v1h-1zM38 124h1v1h-1zM40 124h1v1h-1zM37 123h1v1h-1zM38 123h1v1h-1zM40 123h1v1h-1zM41 123h1v1h-1z" fill="#ff0000"/>
<rect x="63" y="129" width="6" height="1" fill="#ff0000"/>
<path d="M66 131h1v1h-1zM70 131h1v1h-1zM67 130h1v1h-1zM69 130h1v1h-1z" fill="#ff0000"/>
<rect x="70" y="115" width="18" height="15" fill="#f0f0f0"/>
<rect x="70" y="115" width="18" height="1" fill="#000"/>
<rect x="70" y="129" width="18" height="1" fill="#000"/>
<rect x="70" y="115" width="1" height="15" fill="#000"/>
<rect x="87" y="115" width="1" height="15" fill="#000"/>
<rect x="71" y="116" width="16" height="1" fill="#fff"/>
<rect x="71" y="116" width="1" height="13" fill="#fff"/>
<rect x="86" y="120" width="1" height="7" fill="#fff"/>
<rect x="85" y="117" width="2" height="3" fill="#808080"/>
<rect x="72" y="127" width="15" height="1" fill="#989898"/>
<rect x="72" y="128" width="15" height="1" fill="#808080"/>
<rect x="73" y="120" width="11" height="1" fill="#000"/>
<rect x="74" y="121" width="9" height="1" fill="#000"/>
<rect x="75" y="122" width="7" height="1" fill="#000"/>
<rect x="76" y="123" width="5" height="1" fill="#000"/>
<rect x="77" y="124" width="3" height="1" fill="#000"/>
<rect x="78" y="125" width="1" height="1" fill="#000"/>
<polygon points="219.5,664.5 225.5,684.5 260.5,684.5 266.5,664.5" fill="#ffffff"/>
<path d="M219 664h1v1h-1zM219 665h1v1h-1zM220 666h1v1h-1zM220 667h1v1h-1zM220 668h1v1h-1zM220 669h1v1h-1zM221 670h1v1h-1zM221 671h1v1h-1zM221 672h1v1h-1zM222 673h1v1h-1zM222 674h1v1h-1zM222 675h1v1h-1zM223 676h1v1h-1zM223 677h1v1h-1zM223 678h1v1h-1zM223 679h1v1h-1zM224 680h1v1h-1zM224 681h1v1h-1zM224 682h1v1h-1zM225 683h1v1h-1zM225 684h1v1h-1z" fill="#000"/>
<path d="M225 684h1v1h-1zM226 684h1v1h-1zM227 684h1v1h-1zM228 684h1v1h-1zM229 684h1v1h-1zM230 684h1v1h-1zM231 684h1v1h-1zM232 684h1v1h-1zM233 684h1v1h-1zM234 684h1v1h-1zM235 684h1v1h-1zM236 684h1v1h-1zM237 684h1v1h-1zM238 684h1v1h-1zM239 684h1v1h-1zM240 684h1v1h-1zM241 684h1v1h-1zM242 684h1v1h-1zM243 684h1v1h-1zM244 684h1v1h-1zM245 684h1v1h-1zM246 684h1v1h-1zM247 684h1v1h-1zM248 684h1v1h-1zM249 684h1v1h-1zM250 684h1v1h-1zM251 684h1v1h-1zM252 684h1v1h-1zM253 684h1v1h-1zM254 684h1v1h-1zM255 684h1v1h-1zM256 684h1v1h-1zM257 684h1v1h-1zM258 684h1v1h-1zM259 684h1v1h-1zM260 684h1v1h-1z" fill="#000"/>
<path d="M260 684h1v1h-1zM260 683h1v1h-1zM261 682h1v1h-1zM261 681h1v1h-1zM261 680h1v1h-1zM261 679h1v1h-1zM262 678h1v1h-1zM262 677h1v1h-1zM262 676h1v1h-1zM263 675h1v1h-1zM263 674h1v1h-1zM263 673h1v1h-1zM264 672h1v1h-1zM264 671h1v1h-1zM264 670h1v1h-1zM264 669h1v1h-1zM265 668h1v1h-1zM265 667h1v1h-1zM265 666h1v1h-1zM266 665h1v1h-1zM266 664h1v1h-1z" fill="#000"/>
<rect x="219" y="664" width="48" height="1" fill="#000"/>
<polygon points="173.5,664.5 179.5,684.5 218.5,684.5 224.5,664.5" fill="#ffffff"/>
<path d="M173 664h1v1h-1zM173 665h1v1h-1zM174 666h1v1h-1zM174 667h1v1h-1zM174 668h1v1h-1zM174 669h1v1h-1zM175 670h1v1h-1zM175 671h1v1h-1zM175 672h1v1h-1zM176 673h1v1h-1zM176 674h1v1h-1zM176 675h1v1h-1zM177 676h1v1h-1zM177 677h1v1h-1zM177 678h1v1h-1zM177 679h1v1h-1zM178 680h1v1h-1zM178 681h1v1h-1zM178 682h1v1h-1zM179 683h1v1h-1zM179 684h1v1h-1z" fill="#000"/>
<path d="M179 684h1v1h-1zM180 684h1v1h-1zM181 684h1v1h-1zM182 684h1v1h-1zM183 684h1v1h-1zM184 684h1v1h-1zM185 684h1v1h-1zM186 684h1v1h-1zM187 684h1v1h-1zM188 684h1v1h-1zM189 684h1v1h-1zM190 684h1v1h-1zM191 684h1v1h-1zM192 684h1v1h-1zM193 684h1v1h-1zM194 684h1v1h-1zM195 684h1v1h-1zM196 684h1v1h-1zM197 684h1v1h-1zM198 684h1v1h-1zM199 684h1v1h-1zM200 684h1v1h-1zM201 684h1v1h-1zM202 684h1v1h-1zM203 684h1v1h-1zM204 684h1v1h-1zM205 684h1v1h-1zM206 684h1v1h-1zM207 684h1v1h-1zM208 684h1v1h-1zM209 684h1v1h-1zM210 684h1v1h-1zM211 684h1v1h-1zM212 684h1v1h-1zM213 684h1v1h-1zM214 684h1v1h-1zM215 684h1v1h-1zM216 684h1v1h-1zM217 684h1v1h-1zM218 684h1v1h-1z" fill="#000"/>
<path d="M218 684h1v1h-1zM218 683h1v1h-1zM219 682h1v1h-1zM219 681h1v1h-1zM219 680h1v1h-1zM219 679h1v1h-1zM220 678h1v1h-1zM220 677h1v1h-1zM220 676h1v1h-1zM221 675h1v1h-1zM221 674h1v1h-1zM221 673h1v1h-1zM222 672h1v1h-1zM222 671h1v1h-1zM222 670h1v1h-1zM222 669h1v1h-1zM223 668h1v1h-1zM223 667h1v1h-1zM223 666h1v1h-1zM224 665h1v1h-1zM224 664h1v1h-1z" fill="#000"/>
<rect x="173" y="664" width="52" height="1" fill="#000"/>
<polygon points="125.5,664.5 131.5,684.5 172.5,684.5 178.5,664.5" fill="#ffffff"/>
<path d="M125 664h1v1h-1zM125 665h1v1h-1zM126 666h1v1h-1zM126 667h1v1h-1zM126 668h1v1h-1zM126 669h1v1h-1zM127 670h1v1h-1zM127 671h1v1h-1zM127 672h1v1h-1zM128 673h1v1h-1zM128 674h1v1h-1zM128 675h1v1h-1zM129 676h1v1h-1zM129 677h1v1h-1zM129 678h1v1h-1zM129 679h1v1h-1zM130 680h1v1h-1zM130 681h1v1h-1zM130 682h1v1h-1zM131 683h1v1h-1zM131 684h1v1h-1z" fill="#000"/>
<path d="M131 684h1v1h-1zM132 684h1v1h-1zM133 684h1v1h-1zM134 684h1v1h-1zM135 684h1v1h-1zM136 684h1v1h-1zM137 684h1v1h-1zM138 684h1v1h-1zM139 684h1v1h-1zM140 684h1v1h-1zM141 684h1v1h-1zM142 684h1v1h-1zM143 684h1v1h-1zM144 684h1v1h-1zM145 684h1v1h-1zM146 684h1v1h-1zM147 684h1v1h-1zM148 684h1v1h-1zM149 684h1v1h-1zM150 684h1v1h-1zM151 684h1v1h-1zM152 684h1v1h-1zM153 684h1v1h-1zM154 684h1v1h-1zM155 684h1v1h-1zM156 684h1v1h-1zM157 684h1v1h-1zM158 684h1v1h-1zM159 684h1v1h-1zM160 684h1v1h-1zM161 684h1v1h-1zM162 684h1v1h-1zM163 684h1v1h-1zM164 684h1v1h-1zM165 684h1v1h-1zM166 684h1v1h-1zM167 684h1v1h-1zM168 684h1v1h-1zM169 684h1v1h-1zM170 684h1v1h-1zM171 684h1v1h-1zM172 684h1v1h-1z" fill="#000"/>
<path d="M172 684h1v1h-1zM172 683h1v1h-1zM173 682h1v1h-1zM173 681h1v1h-1zM173 680h1v1h-1zM173 679h1v1h-1zM174 678h1v1h-1zM174 677h1v1h-1zM174 676h1v1h-1zM175 675h1v1h-1zM175 674h1v1h-1zM175 673h1v1h-1zM176 672h1v1h-1zM176 671h1v1h-1zM176 670h1v1h-1zM176 669h1v1h-1zM177 668h1v1h-1zM177 667h1v1h-1zM177 666h1v1h-1zM178 665h1v1h-1zM178 664h1v1h-1z" fill="#000"/>
<rect x="125" y="664" width="54" height="1" fill="#000"/>
<polygon points="25.5,664.5 32.5,684.5 76.5,684.5 82.5,664.5" fill="#ffffff"/>
<path d="M25 664h1v1h-1zM25 665h1v1h-1zM26 666h1v1h-1zM26 667h1v1h-1zM26 668h1v1h-1zM27 669h1v1h-1zM27 670h1v1h-1zM27 671h1v1h-1zM28 672h1v1h-1zM28 673h1v1h-1zM28 674h1v1h-1zM29 675h1v1h-1zM29 676h1v1h-1zM30 677h1v1h-1zM30 678h1v1h-1zM30 679h1v1h-1zM31 680h1v1h-1zM31 681h1v1h-1zM31 682h1v1h-1zM32 683h1v1h-1zM32 684h1v1h-1z" fill="#000"/>
<path d="M32 684h1v1h-1zM33 684h1v1h-1zM34 684h1v1h-1zM35 684h1v1h-1zM36 684h1v1h-1zM37 684h1v1h-1zM38 684h1v1h-1zM39 684h1v1h-1zM40 684h1v1h-1zM41 684h1v1h-1zM42 684h1v1h-1zM43 684h1v1h-1zM44 684h1v1h-1zM45 684h1v1h-1zM46 684h1v1h-1zM47 684h1v1h-1zM48 684h1v1h-1zM49 684h1v1h-1zM50 684h1v1h-1zM51 684h1v1h-1zM52 684h1v1h-1zM53 684h1v1h-1zM54 684h1v1h-1zM55 684h1v1h-1zM56 684h1v1h-1zM57 684h1v1h-1zM58 684h1v1h-1zM59 684h1v1h-1zM60 684h1v1h-1zM61 684h1v1h-1zM62 684h1v1h-1zM63 684h1v1h-1zM64 684h1v1h-1zM65 684h1v1h-1zM66 684h1v1h-1zM67 684h1v1h-1zM68 684h1v1h-1zM69 684h1v1h-1zM70 684h1v1h-1zM71 684h1v1h-1zM72 684h1v1h-1zM73 684h1v1h-1zM74 684h1v1h-1zM75 684h1v1h-1zM76 684h1v1h-1z" fill="#000"/>
<path d="M76 684h1v1h-1zM76 683h1v1h-1zM77 682h1v1h-1zM77 681h1v1h-1zM77 680h1v1h-1zM77 679h1v1h-1zM78 678h1v1h-1zM78 677h1v1h-1zM78 676h1v1h-1zM79 675h1v1h-1zM79 674h1v1h-1zM79 673h1v1h-1zM80 672h1v1h-1zM80 671h1v1h-1zM80 670h1v1h-1zM80 669h1v1h-1zM81 668h1v1h-1zM81 667h1v1h-1zM81 666h1v1h-1zM82 665h1v1h-1zM82 664h1v1h-1z" fill="#000"/>
<rect x="25" y="664" width="58" height="1" fill="#000"/>
<polygon points="76.5,664.5 83.5,684.5 124.5,684.5 130.5,664.5" fill="#f0f0f0"/>
<path d="M76 664h1v1h-1zM76 665h1v1h-1zM77 666h1v1h-1zM77 667h1v1h-1zM77 668h1v1h-1zM78 669h1v1h-1zM78 670h1v1h-1zM78 671h1v1h-1zM79 672h1v1h-1zM79 673h1v1h-1zM79 674h1v1h-1zM80 675h1v1h-1zM80 676h1v1h-1zM81 677h1v1h-1zM81 678h1v1h-1zM81 679h1v1h-1zM82 680h1v1h-1zM82 681h1v1h-1zM82 682h1v1h-1zM83 683h1v1h-1zM83 684h1v1h-1z" fill="#000"/>
<path d="M83 684h1v1h-1zM84 684h1v1h-1zM85 684h1v1h-1zM86 684h1v1h-1zM87 684h1v1h-1zM88 684h1v1h-1zM89 684h1v1h-1zM90 684h1v1h-1zM91 684h1v1h-1zM92 684h1v1h-1zM93 684h1v1h-1zM94 684h1v1h-1zM95 684h1v1h-1zM96 684h1v1h-1zM97 684h1v1h-1zM98 684h1v1h-1zM99 684h1v1h-1zM100 684h1v1h-1zM101 684h1v1h-1zM102 684h1v1h-1zM103 684h1v1h-1zM104 684h1v1h-1zM105 684h1v1h-1zM106 684h1v1h-1zM107 684h1v1h-1zM108 684h1v1h-1zM109 684h1v1h-1zM110 684h1v1h-1zM111 684h1v1h-1zM112 684h1v1h-1zM113 684h1v1h-1zM114 684h1v1h-1zM115 684h1v1h-1zM116 684h1v1h-1zM117 684h1v1h-1zM118 684h1v1h-1zM119 684h1v1h-1zM120 684h1v1h-1zM121 684h1v1h-1zM122 684h1v1h-1zM123 684h1v1h-1zM124 684h1v1h-1z" fill="#000"/>
<path d="M124 684h1v1h-1zM124 683h1v1h-1zM125 682h1v1h-1zM125 681h1v1h-1zM125 680h1v1h-1zM125 679h1v1h-1zM126 678h1v1h-1zM126 677h1v1h-1zM126 676h1v1h-1zM127 675h1v1h-1zM127 674h1v1h-1zM127 673h1v1h-1zM128 672h1v1h-1zM128 671h1v1h-1zM128 670h1v1h-1zM128 669h1v1h-1zM129 668h1v1h-1zM129 667h1v1h-1zM129 666h1v1h-1zM130 665h1v1h-1zM130 664h1v1h-1z" fill="#000"/>
<rect x="77" y="664" width="53" height="1" fill="#f0f0f0"/>
<rect x="77" y="663" width="53" height="1" fill="#f0f0f0"/>
<g shape-rendering="geometricPrecision">
<text x="55.2" y="678" font-size="10.5" fill="#000" text-anchor="middle" >Situation</text>
<text x="104.5" y="679" font-size="10.5" fill="#000" text-anchor="middle" >Solution</text>
<text x="152.5" y="678" font-size="10.5" fill="#000" text-anchor="middle" >B. O. M.</text>
<text x="199.5" y="678" font-size="10.5" fill="#000" text-anchor="middle" >Costing</text>
<text x="243.0" y="678" font-size="10.5" fill="#000" text-anchor="middle" >Pricing</text>
</g>
<rect x="17" y="697" width="80" height="23" fill="#f0f0f0"/>
<rect x="17" y="697" width="79" height="1" fill="#fff"/>
<rect x="17" y="697" width="1" height="22" fill="#fff"/>
<rect x="17" y="719" width="80" height="1" fill="#696969"/>
<rect x="96" y="697" width="1" height="23" fill="#696969"/>
<rect x="18" y="718" width="78" height="1" fill="#a0a0a0"/>
<rect x="95" y="698" width="1" height="21" fill="#a0a0a0"/>
<rect x="113" y="697" width="80" height="23" fill="#f0f0f0"/>
<rect x="113" y="697" width="79" height="1" fill="#fff"/>
<rect x="113" y="697" width="1" height="22" fill="#fff"/>
<rect x="113" y="719" width="80" height="1" fill="#696969"/>
<rect x="192" y="697" width="1" height="23" fill="#696969"/>
<rect x="114" y="718" width="78" height="1" fill="#a0a0a0"/>
<rect x="191" y="698" width="1" height="21" fill="#a0a0a0"/>
<g filter="url(#thr)">
<text x="56.5" y="712" font-size="12.5" fill="#000" text-anchor="middle" textLength="15" lengthAdjust="spacingAndGlyphs">OK</text>
<rect x="57" y="713" width="7" height="1" fill="#000"/>
<text x="153" y="712" font-size="12.5" fill="#000" text-anchor="middle" textLength="32" lengthAdjust="spacingAndGlyphs">Cancel</text>
</g>
</svg>
</body></html>
